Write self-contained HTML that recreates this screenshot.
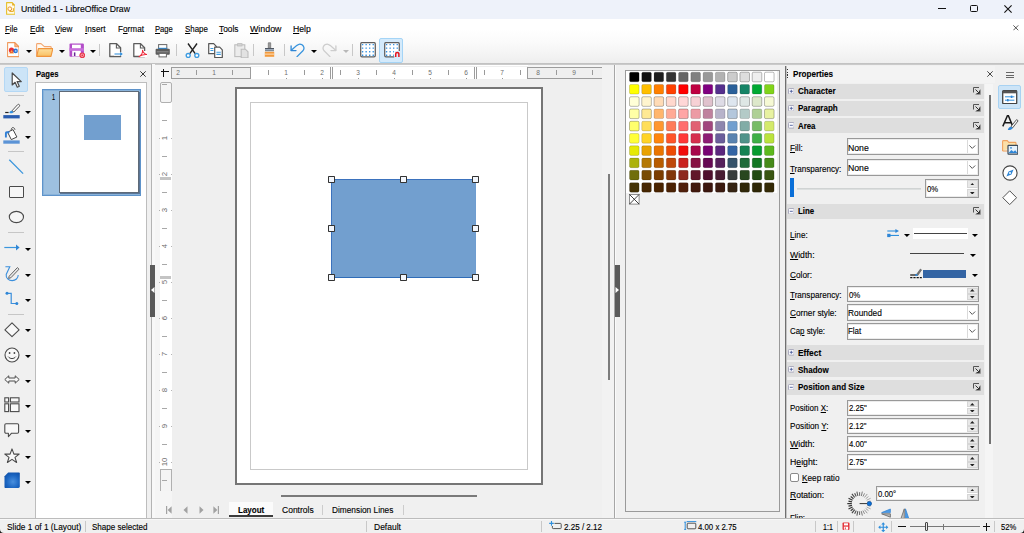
<!DOCTYPE html>
<html><head><meta charset="utf-8"><title>Untitled 1 - LibreOffice Draw</title>
<style>
*{box-sizing:border-box;margin:0;padding:0}
html,body{width:1024px;height:533px;overflow:hidden;background:#f0f0f0;font-family:"Liberation Sans",sans-serif;font-size:11px;color:#000}
.a{position:absolute}
.t{position:absolute;white-space:nowrap;line-height:14px;height:14px;-webkit-text-stroke:0.13px currentColor}
u{text-decoration-thickness:1px;text-underline-offset:1px}
.b{font-weight:bold}
.sec{position:absolute;left:787px;width:196px;height:15px;background:#dedede}
.sec .t{left:11px;top:0;font-weight:bold;font-size:11px;letter-spacing:-0.3px}
.pm{position:absolute;left:1px;top:3px;width:9px;height:9px;border:1px solid #8a8a9a;background:#fff;border-radius:1px}
.pm:before{content:"";position:absolute;left:1px;top:3px;width:5px;height:1px;background:#33518a}
.pm.plus:after{content:"";position:absolute;left:3px;top:1px;width:1px;height:5px;background:#33518a}
.more{position:absolute;left:186px;top:4px;width:8px;height:8px}
.box{position:absolute;background:#fff;border:1px solid #7a7a7a}
.box .t{left:3px;top:0px;font-size:11px}
.cb:after{content:"";position:absolute;right:14px;top:1px;bottom:1px;width:1px;background:#d0d0d0}
.lbl{font-size:11px;left:790px}
.sp{position:absolute;right:0;top:0;bottom:0;width:12px;background:#f0f0f0;border-left:1px solid #d4d4d4}
.sep{position:absolute;width:1px;background:#c4c4c4}
.arr{position:absolute;width:0;height:0;border-left:3px solid transparent;border-right:3px solid transparent;border-top:4px solid #000}
.sw{position:absolute;width:10px;height:10px;border-radius:1.5px}
</style></head><body>

<div class="a" style="left:0;top:0;width:1024px;height:19px;background:#eef2fa"></div>
<div class="t" style="left:20.60px;top:2.97px;font-size:9.80px;line-height:normal;height:auto;transform-origin:0 0;transform:scaleX(0.8868);">Untitled 1 - LibreOffice Draw</div>
<svg class="a" style="left:5.800px;top:1.800px" width="9.600" height="12.800" viewBox="0 0 9.600 12.800"><path d="M.6 .6h5.600l2.800 2.800v8.800H.6z" fill="#fffbe6" stroke="#e6c02c" stroke-width="1.100" stroke-linejoin="round"/><path d="M6.200 .6v2.800h2.800z" fill="#e8a820"/><circle cx="3.800" cy="6.800" r="1.900" fill="none" stroke="#e89030" stroke-width="1"/><path d="M3.400 9.400h4v-3.200" fill="none" stroke="#e8a820" stroke-width="1"/></svg>
<div class="a" style="left:938px;top:8px;width:8px;height:1.200px;background:#111"></div>
<div class="a" style="left:970.300px;top:4.600px;width:7.600px;height:7.600px;border:1.200px solid #111;border-radius:1.500px"></div>
<svg class="a" style="left:1003.500px;top:4.700px" width="8" height="8" viewBox="0 0 8 8"><path d="M.4 .4l7.200 7.200M7.600 .4l-7.200 7.200" stroke="#111" stroke-width="1.100"/></svg>
<div class="a" style="left:0;top:19px;width:1024px;height:44px;background:linear-gradient(#fff 0%,#fff 22%,#fbfbfb 50%,#f4f4f4 80%,#eeeeee 100%)"></div>
<div class="t" style="left:5.10px;top:22.75px;font-size:9.60px;line-height:normal;height:auto;transform-origin:0 0;transform:scaleX(0.8081);"><u>F</u>ile</div>
<div class="t" style="left:29.50px;top:22.75px;font-size:9.60px;line-height:normal;height:auto;transform-origin:0 0;transform:scaleX(0.8524);"><u>E</u>dit</div>
<div class="t" style="left:55.20px;top:22.75px;font-size:9.60px;line-height:normal;height:auto;transform-origin:0 0;transform:scaleX(0.8432);"><u>V</u>iew</div>
<div class="t" style="left:84.80px;top:22.75px;font-size:9.60px;line-height:normal;height:auto;transform-origin:0 0;transform:scaleX(0.8497);"><u>I</u>nsert</div>
<div class="t" style="left:117.60px;top:22.75px;font-size:9.60px;line-height:normal;height:auto;transform-origin:0 0;transform:scaleX(0.8552);">F<u>o</u>rmat</div>
<div class="t" style="left:155.40px;top:22.75px;font-size:9.60px;line-height:normal;height:auto;transform-origin:0 0;transform:scaleX(0.7939);"><u>P</u>age</div>
<div class="t" style="left:184.80px;top:22.75px;font-size:9.60px;line-height:normal;height:auto;transform-origin:0 0;transform:scaleX(0.8249);"><u>S</u>hape</div>
<div class="t" style="left:219.00px;top:22.75px;font-size:9.60px;line-height:normal;height:auto;transform-origin:0 0;transform:scaleX(0.8701);"><u>T</u>ools</div>
<div class="t" style="left:250.10px;top:22.75px;font-size:9.60px;line-height:normal;height:auto;transform-origin:0 0;transform:scaleX(0.9226);"><u>W</u>indow</div>
<div class="t" style="left:293.30px;top:22.75px;font-size:9.60px;line-height:normal;height:auto;transform-origin:0 0;transform:scaleX(0.9015);"><u>H</u>elp</div>
<svg class="a" style="left:1013px;top:25px" width="6" height="6" viewBox="0 0 8 8"><path d="M.5 .5l6.5 6.5M7 .5l-6.500 6.500" stroke="#222" stroke-width="1"/></svg>
<div class="a" style="left:0;top:63px;width:1024px;height:1px;background:#c2c2c2"></div>
<div class="a" style="left:0;top:64px;width:1024px;height:1px;background:#cacaca"></div>
<svg class="a" style="left:6.7px;top:42.4px" width="12.8" height="15.2" viewBox="0 0 12.8 15.2"><path d="M.6 .6h7.200l4.200 4.200v9.800H.6z" fill="#fff" stroke="#f09a5e" stroke-width="1.100" stroke-linejoin="round"/><path d="M7.800 .6l4.200 4.200H7.800z" fill="#f6b488" stroke="#f08a44" stroke-width=".8" stroke-linejoin="round"/><path d="M2.200 11.600L4.600 7.600L7 11.600z" fill="#f5a030"/><circle cx="4.500" cy="8.200" r="2.600" fill="#e8303a"/><path d="M3.300 10.200L4.600 8L5.900 10.200z" fill="#f8b040"/><circle cx="8.600" cy="8.900" r="2.300" fill="#2a78d8"/><circle cx="8.700" cy="8.900" r=".9" fill="#a6d4ff"/></svg>
<svg class="a" style="left:26.3px;top:50.0px" width="6" height="4" viewBox="0 0 6 4"><path d="M0 0h6 l-3.0 3 z" fill="#000"/></svg>
<svg class="a" style="left:36px;top:42.8px" width="17.4" height="14.4" viewBox="0 0 17.4 14.4"><defs><linearGradient id="fg" x1="0" y1="0" x2="0" y2="1"><stop offset="0" stop-color="#fde0a0"/><stop offset="1" stop-color="#f9c062"/></linearGradient></defs><path d="M.6 13.200V1.400c0-.5.300-.8.800-.8h3.600l3.400 3h6c.5 0 .8.300.8.800v1.400" fill="#fffaf2" stroke="#f3a670" stroke-width="1.100" stroke-linejoin="round"/><path d="M.8 13.400L2.400 5.600h14.400l-1.800 7.800z" fill="url(#fg)" stroke="#f0943c" stroke-width="1.100" stroke-linejoin="round"/></svg>
<svg class="a" style="left:58.5px;top:50.0px" width="6" height="4" viewBox="0 0 6 4"><path d="M0 0h6 l-3.0 3 z" fill="#000"/></svg>
<svg class="a" style="left:68.5px;top:43px" width="16.5" height="15" viewBox="0 0 16.5 15"><rect x=".5" y=".4" width="14.400" height="13.400" rx="1.100" fill="#b24cc8"/><rect x=".5" y="5.200" width="14.400" height="2.600" fill="#c870dc"/><rect x="3" y="1.700" width="8.800" height="3.500" fill="#fff"/><rect x="3.200" y="7.800" width="8.600" height="5.600" fill="#fff"/><rect x="4.900" y="9.400" width="1.500" height="3.600" fill="#6a2496"/><circle cx="13.300" cy="12.300" r="2.900" fill="#ea3648"/><circle cx="13.300" cy="12.300" r="1.300" fill="none" stroke="#fbd0d4" stroke-width=".7"/></svg>
<svg class="a" style="left:90.3px;top:50.0px" width="6" height="4" viewBox="0 0 6 4"><path d="M0 0h6 l-3.0 3 z" fill="#000"/></svg>
<div class="a" style="left:99px;top:44px;width:1px;height:12px;background:#c8c8c8"></div>
<svg class="a" style="left:108.5px;top:43.3px" width="14.5" height="14.5" viewBox="0 0 14.5 14.5"><path d="M.8 .7h6.800l4 4v8.800H.8z" fill="#fff" stroke="#5d5d5d" stroke-width="1.300" stroke-linejoin="round"/><path d="M7.400 .8v4.200h4.200" fill="none" stroke="#5d5d5d" stroke-width="1.100"/><rect x="5" y="9.300" width="8.500" height="3.400" fill="#fff"/><path d="M5.500 11h7" stroke="#2f8fdc" stroke-width="1.050"/><path d="M11.200 9l2.600 2l-2.600 2z" fill="#2f8fdc"/></svg>
<svg class="a" style="left:132.5px;top:43.3px" width="14.5" height="14.5" viewBox="0 0 14.5 14.5"><path d="M.8 .7h6.800l4 4v8.800H.8z" fill="#fff" stroke="#5d5d5d" stroke-width="1.300" stroke-linejoin="round"/><path d="M7.400 .8v4.200h4.200" fill="none" stroke="#5d5d5d" stroke-width="1.100"/><rect x="6" y="8" width="8" height="6" fill="#fff"/><path d="M9.500 7.200c.3 2.500-1 5-3.400 6.500M9.500 7.200c.5 2.300 2 3.800 4.300 4.300M6.300 13.300c2.300-1.400 5-2 7.500-1.800" fill="none" stroke="#ec2b3c" stroke-width="1.050" stroke-linecap="round"/></svg>
<svg class="a" style="left:155px;top:44px" width="15.5" height="13.5" viewBox="0 0 15.5 13.5"><rect x="3.600" y=".6" width="8.200" height="4.400" fill="#fff" stroke="#666" stroke-width="1"/><rect x="3.200" y="3.800" width="9" height="1.500" fill="#2f8fdc"/><rect x=".6" y="4.800" width="14.200" height="6" rx="1" fill="#5c5c5c"/><rect x="1.800" y="7.200" width="11.800" height="1.200" fill="#8a8a8a"/><rect x="4" y="9.400" width="7.400" height="3.500" fill="#fff" stroke="#666" stroke-width="1"/></svg>
<div class="a" style="left:176px;top:44px;width:1px;height:12px;background:#c8c8c8"></div>
<svg class="a" style="left:184.5px;top:42.5px" width="15" height="15.5" viewBox="0 0 15 15.5"><path d="M3 .5l7.200 10.200M12 .5L4.800 10.700" stroke="#222" stroke-width="1.400" fill="none"/><circle cx="3.200" cy="12.500" r="2" fill="#fff" stroke="#3d9be0" stroke-width="1.400"/><circle cx="11.800" cy="12.500" r="2" fill="#fff" stroke="#3d9be0" stroke-width="1.400"/></svg>
<svg class="a" style="left:208px;top:42.5px" width="15.5" height="15.5" viewBox="0 0 15.5 15.5"><path d="M.7 .7h5l2.600 2.600v7.400H.7z" fill="#fff" stroke="#555" stroke-width="1.200" stroke-linejoin="round"/><path d="M2.400 5.500h3M2.400 7.500h3" stroke="#3d9be0" stroke-width="1"/><path d="M6.700 4.200h5l2.600 2.600v7.700H6.700z" fill="#fff" stroke="#555" stroke-width="1.200" stroke-linejoin="round"/><path d="M8.400 9.200h4.400M8.400 11.400h4.400" stroke="#3d9be0" stroke-width="1.100"/></svg>
<svg class="a" style="left:233.5px;top:42.5px" width="15.5" height="15.5" viewBox="0 0 15.5 15.5"><rect x=".8" y="1.800" width="10" height="11.800" fill="#ececec" stroke="#bdbdbd" stroke-width="1.100"/><rect x="3.600" y=".6" width="4.400" height="2.400" fill="#d2d2d2" stroke="#bdbdbd" stroke-width=".8"/><path d="M7.200 6.200h4.200l2.600 2.600v6H7.200z" fill="#e2e2e2" stroke="#bdbdbd" stroke-width="1.100"/></svg>
<div class="a" style="left:253px;top:44px;width:1px;height:12px;background:#c8c8c8"></div>
<svg class="a" style="left:263.5px;top:42px" width="11" height="15.5" viewBox="0 0 11 15.5"><path d="M4.300 .8h2.400v5.400h-2.400z" fill="#9a9a9a" stroke="#777" stroke-width=".8"/><path d="M1 6h9v3.200H1z" fill="#4e5560"/><rect x="1" y="7.400" width="9" height="1" fill="#cfe0f0"/><path d="M.8 9.800h9.400v5H.8z" fill="#f39a3c"/><rect x=".8" y="11.600" width="9.400" height="1" fill="#fde2c0"/></svg>
<div class="a" style="left:284px;top:44px;width:1px;height:12px;background:#c8c8c8"></div>
<svg class="a" style="left:290px;top:42.5px" width="15" height="14.5" viewBox="0 0 15 14.5"><path d="M7 13.700L12.900 7.800C15.200 5.300 13.400 1 9.700 1C7.600 1 6.400 2.200 1.300 7.300" fill="none" stroke="#3793dd" stroke-width="1.250" stroke-linecap="round"/><path d="M1.100 3v4.600h4.900" fill="none" stroke="#2f86d6" stroke-width="1.300" stroke-linecap="round" stroke-linejoin="round"/></svg>
<svg class="a" style="left:311.0px;top:50.0px" width="6" height="4" viewBox="0 0 6 4"><path d="M0 0h6 l-3.0 3 z" fill="#000"/></svg>
<svg class="a" style="left:321.5px;top:42.5px" width="15" height="14.5" viewBox="0 0 15 14.5"><g transform="translate(15 0) scale(-1 1)"><path d="M7 13.700L12.900 7.800C15.200 5.300 13.400 1 9.700 1C7.600 1 6.400 2.200 1.300 7.300" fill="none" stroke="#cdcdcd" stroke-width="1.250" stroke-linecap="round"/><path d="M1.100 3v4.600h4.900" fill="none" stroke="#cdcdcd" stroke-width="1.300" stroke-linecap="round" stroke-linejoin="round"/></g></svg>
<svg class="a" style="left:342.7px;top:49.8px" width="6" height="4" viewBox="0 0 6 4"><path d="M0 0h6 l-3.0 3 z" fill="#b8b8b8"/></svg>
<div class="a" style="left:352px;top:44px;width:1px;height:12px;background:#c8c8c8"></div>
<svg class="a" style="left:360px;top:42px" width="16.4" height="16" viewBox="0 0 16.4 16"><rect x=".7" y=".6" width="14.600" height="14.200" rx="1.300" fill="#fff" stroke="#5e5e5e" stroke-width="1.250"/><rect x="1.90" y="1.90" width="1.400" height="1.400" rx=".3" fill="#2f8fe0"/><rect x="1.90" y="5.45" width="1.400" height="1.400" rx=".3" fill="#2f8fe0"/><rect x="1.90" y="9.00" width="1.400" height="1.400" rx=".3" fill="#2f8fe0"/><rect x="1.90" y="12.55" width="1.400" height="1.400" rx=".3" fill="#2f8fe0"/><rect x="5.45" y="1.90" width="1.400" height="1.400" rx=".3" fill="#2f8fe0"/><rect x="5.45" y="5.45" width="1.400" height="1.400" rx=".3" fill="#2f8fe0"/><rect x="5.45" y="9.00" width="1.400" height="1.400" rx=".3" fill="#2f8fe0"/><rect x="5.45" y="12.55" width="1.400" height="1.400" rx=".3" fill="#2f8fe0"/><rect x="9.00" y="1.90" width="1.400" height="1.400" rx=".3" fill="#2f8fe0"/><rect x="9.00" y="5.45" width="1.400" height="1.400" rx=".3" fill="#2f8fe0"/><rect x="9.00" y="9.00" width="1.400" height="1.400" rx=".3" fill="#2f8fe0"/><rect x="9.00" y="12.55" width="1.400" height="1.400" rx=".3" fill="#2f8fe0"/><rect x="12.55" y="1.90" width="1.400" height="1.400" rx=".3" fill="#2f8fe0"/><rect x="12.55" y="5.45" width="1.400" height="1.400" rx=".3" fill="#2f8fe0"/><rect x="12.55" y="9.00" width="1.400" height="1.400" rx=".3" fill="#2f8fe0"/><rect x="12.55" y="12.55" width="1.400" height="1.400" rx=".3" fill="#2f8fe0"/></svg>
<div class="a" style="left:379px;top:38px;width:23.600px;height:24.500px;background:#d4eafb;border:1px solid #a4d4f6;border-radius:2px"></div>
<svg class="a" style="left:384px;top:42px" width="16.4" height="16" viewBox="0 0 16.4 16"><rect x=".7" y=".6" width="14.600" height="14.200" rx="1.300" fill="#fff" stroke="#5e5e5e" stroke-width="1.250"/><rect x="1.90" y="1.90" width="1.400" height="1.400" rx=".3" fill="#2f8fe0"/><rect x="1.90" y="5.45" width="1.400" height="1.400" rx=".3" fill="#2f8fe0"/><rect x="1.90" y="9.00" width="1.400" height="1.400" rx=".3" fill="#2f8fe0"/><rect x="1.90" y="12.55" width="1.400" height="1.400" rx=".3" fill="#2f8fe0"/><rect x="5.45" y="1.90" width="1.400" height="1.400" rx=".3" fill="#2f8fe0"/><rect x="5.45" y="5.45" width="1.400" height="1.400" rx=".3" fill="#2f8fe0"/><rect x="5.45" y="9.00" width="1.400" height="1.400" rx=".3" fill="#2f8fe0"/><rect x="5.45" y="12.55" width="1.400" height="1.400" rx=".3" fill="#2f8fe0"/><rect x="9.00" y="1.90" width="1.400" height="1.400" rx=".3" fill="#2f8fe0"/><rect x="9.00" y="5.45" width="1.400" height="1.400" rx=".3" fill="#2f8fe0"/><rect x="9.00" y="9.00" width="1.400" height="1.400" rx=".3" fill="#2f8fe0"/><rect x="9.00" y="12.55" width="1.400" height="1.400" rx=".3" fill="#2f8fe0"/><rect x="12.55" y="1.90" width="1.400" height="1.400" rx=".3" fill="#2f8fe0"/><rect x="12.55" y="5.45" width="1.400" height="1.400" rx=".3" fill="#2f8fe0"/><rect x="12.55" y="9.00" width="1.400" height="1.400" rx=".3" fill="#2f8fe0"/><rect x="10.200" y="9" width="6" height="7" fill="#d6ebfb"/><rect x="9.800" y="9.400" width="1.400" height="4.800" fill="#fff"/><path d="M11.700 15v-3a1.600 1.600 0 0 1 3.200 0v3" fill="none" stroke="#e8141e" stroke-width="1.500"/></svg>
<div class="a" style="left:4px;top:67px;width:24px;height:25px;background:#cce4f7;border:1px solid #b4d8f5;border-radius:2px"></div>
<svg class="a" style="left:10.5px;top:71.5px" width="12" height="17" viewBox="0 0 12 17"><path d="M1.200 1v12l2.900-2.700l2.200 4.900l2-.9l-2.200-4.700h4.200z" fill="#fff" stroke="#4a4a4a" stroke-width="1.200" stroke-linejoin="round"/></svg>
<div class="a" style="left:8px;top:95px;width:16px;height:1px;background:#c6c6c6"></div>
<svg class="a" style="left:3px;top:103px" width="18" height="17" viewBox="0 0 18 17"><path d="M2.200 9.500h3.400" stroke="#222" stroke-width="1.200"/><path d="M6.400 9.900c0-1.400 1.200-2.400 2.600-2.200l1.500 1.400c-.4 1.200-2.400 1.600-4.100.8z" fill="#2f8fe0"/><path d="M9.200 7.600L14.600 1.700c.5-.5 1.300-.5 1.700 0c.4.400.4 1.100 0 1.600L10.800 9z" fill="#fff" stroke="#444" stroke-width=".9" stroke-linejoin="round"/><rect x=".3" y="12.100" width="16.400" height="3.300" fill="#2a5db0"/></svg>
<svg class="a" style="left:25.1px;top:111.0px" width="6" height="4" viewBox="0 0 6 4"><path d="M0 0h6 l-3.0 3 z" fill="#000"/></svg>
<svg class="a" style="left:3px;top:126px" width="18" height="18" viewBox="0 0 18 18"><path d="M4.600 6.200l5.400-2.600l3.900 7.400l-5.600 2.600z" fill="#fff" stroke="#444" stroke-width="1" stroke-linejoin="round"/><path d="M8.400 4.600c-.4-1.600.2-2.800 1.300-3c1.100-.2 2 .7 2.300 2.200" fill="none" stroke="#444" stroke-width=".9"/><path d="M6.400 6.200H3.800c-.6 0-.9.300-.9.900v4.400" fill="none" stroke="#2f7fd6" stroke-width="1.900"/><rect x=".3" y="14.400" width="16.400" height="3.300" fill="#5b93d6"/></svg>
<svg class="a" style="left:25.1px;top:135.9px" width="6" height="4" viewBox="0 0 6 4"><path d="M0 0h6 l-3.0 3 z" fill="#000"/></svg>
<div class="a" style="left:8px;top:151px;width:16px;height:1px;background:#c6c6c6"></div>
<svg class="a" style="left:8px;top:158px" width="17" height="17" viewBox="0 0 17 17"><path d="M1.300 1.800L15.100 15.600" stroke="#3b96dd" stroke-width="1.300"/></svg>
<div class="a" style="left:9px;top:186px;width:15px;height:12px;background:#f6f6f6;border:1.3px solid #4a4a4a;border-radius:1px"></div>
<svg class="a" style="left:8px;top:210px" width="17" height="14" viewBox="0 0 17 14"><ellipse cx="8.400" cy="7" rx="7.100" ry="5.600" fill="#f6f6f6" stroke="#4a4a4a" stroke-width="1.100"/></svg>
<div class="a" style="left:8px;top:232px;width:16px;height:1px;background:#c6c6c6"></div>
<svg class="a" style="left:4px;top:243px" width="17" height="9" viewBox="0 0 17 9"><path d="M.3 4.500h13" stroke="#3b96dd" stroke-width="1.200"/><path d="M12 1.600l3.600 2.900l-3.600 2.900z" fill="#2f86d6"/></svg>
<svg class="a" style="left:25.1px;top:247.7px" width="6" height="4" viewBox="0 0 6 4"><path d="M0 0h6 l-3.0 3 z" fill="#000"/></svg>
<svg class="a" style="left:4px;top:265px" width="16" height="17" viewBox="0 0 16 17"><path d="M1.400 1.800h4.400l-3.600 7.600c-.6 3.600 2.600 6.200 6 6.200c3.400 0 6-2.400 6-5.600" fill="none" stroke="#3b8fdc" stroke-width="1.100"/><path d="M5.200 11.200l8.200-8.600l1.600 1.600l-8.200 8.600l-2.200.6z" fill="#e8e8e8" stroke="#555" stroke-width=".9" stroke-linejoin="round"/></svg>
<svg class="a" style="left:25.1px;top:273.5px" width="6" height="4" viewBox="0 0 6 4"><path d="M0 0h6 l-3.0 3 z" fill="#000"/></svg>
<svg class="a" style="left:4.5px;top:291px" width="14" height="15" viewBox="0 0 14 15"><path d="M2 2.300h4.200v10.200h5.800" fill="none" stroke="#3b8fdc" stroke-width="1.200"/><circle cx="2" cy="2.300" r="1.500" fill="#2f86d6"/><circle cx="11.800" cy="12.500" r="1.500" fill="#2f86d6"/></svg>
<svg class="a" style="left:25.1px;top:298.5px" width="6" height="4" viewBox="0 0 6 4"><path d="M0 0h6 l-3.0 3 z" fill="#000"/></svg>
<div class="a" style="left:8px;top:314px;width:16px;height:1px;background:#c6c6c6"></div>
<svg class="a" style="left:3.5px;top:321.5px" width="16" height="16" viewBox="0 0 16 16"><path d="M8 .9l7.100 6.900l-7.100 6.900L.9 7.800z" fill="#f8f8f8" stroke="#4a4a4a" stroke-width="1.100" stroke-linejoin="round"/></svg>
<svg class="a" style="left:25.1px;top:329.4px" width="6" height="4" viewBox="0 0 6 4"><path d="M0 0h6 l-3.0 3 z" fill="#000"/></svg>
<svg class="a" style="left:3.5px;top:346.5px" width="16" height="16" viewBox="0 0 16 16"><circle cx="8" cy="8" r="7" fill="#f8f8f8" stroke="#4a4a4a" stroke-width="1.100"/><circle cx="5.600" cy="6" r=".9" fill="#444"/><circle cx="10.400" cy="6" r=".9" fill="#444"/><path d="M4.200 9.600c1.800 2.600 5.800 2.600 7.600 0" fill="none" stroke="#444" stroke-width="1"/></svg>
<svg class="a" style="left:25.1px;top:354.7px" width="6" height="4" viewBox="0 0 6 4"><path d="M0 0h6 l-3.0 3 z" fill="#000"/></svg>
<svg class="a" style="left:3.5px;top:375px" width="16" height="9" viewBox="0 0 16 9"><path d="M.8 4.500l4-3.700v2.200h6.400V.8l4 3.700l-4 3.700V6H4.800v2.200z" fill="#f8f8f8" stroke="#4a4a4a" stroke-width="1" stroke-linejoin="round"/></svg>
<svg class="a" style="left:25.1px;top:380.0px" width="6" height="4" viewBox="0 0 6 4"><path d="M0 0h6 l-3.0 3 z" fill="#000"/></svg>
<svg class="a" style="left:3.5px;top:397px" width="16" height="15.5" viewBox="0 0 16 15.5"><g fill="#f8f8f8" stroke="#4a4a4a" stroke-width="1.100"><rect x=".8" y=".8" width="3.800" height="4.200"/><rect x="6.400" y=".8" width="8.600" height="4.200"/><rect x=".8" y="6.800" width="3.800" height="7.800"/><rect x="6.400" y="6.800" width="8.600" height="7.800"/></g></svg>
<svg class="a" style="left:25.1px;top:405.2px" width="6" height="4" viewBox="0 0 6 4"><path d="M0 0h6 l-3.0 3 z" fill="#000"/></svg>
<svg class="a" style="left:3.5px;top:422.5px" width="16" height="15" viewBox="0 0 16 15"><path d="M2 .8h11.400c.7 0 1.200.5 1.200 1.200v7c0 .7-.5 1.200-1.200 1.200H7.600L4.400 13.600V10.200H2c-.7 0-1.200-.5-1.200-1.200V2C.8 1.300 1.300.8 2 .8z" fill="#f8f8f8" stroke="#4a4a4a" stroke-width="1.100" stroke-linejoin="round"/></svg>
<svg class="a" style="left:25.1px;top:430.0px" width="6" height="4" viewBox="0 0 6 4"><path d="M0 0h6 l-3.0 3 z" fill="#000"/></svg>
<svg class="a" style="left:3.5px;top:447.5px" width="16" height="15" viewBox="0 0 16 15"><path d="M8 .9l1.900 5.200h5.300l-4.200 3.300l1.600 5.100L8 11.400l-4.600 3.100l1.600-5.100L.8 6.100h5.300z" fill="#f8f8f8" stroke="#4a4a4a" stroke-width="1.100" stroke-linejoin="round"/></svg>
<svg class="a" style="left:25.1px;top:455.8px" width="6" height="4" viewBox="0 0 6 4"><path d="M0 0h6 l-3.0 3 z" fill="#000"/></svg>
<svg class="a" style="left:3.5px;top:472px" width="16.5" height="16.5" viewBox="0 0 16.5 16.5"><defs><radialGradient id="cg" cx=".55" cy=".6" r=".75"><stop offset="0" stop-color="#4a90de"/><stop offset=".55" stop-color="#1c66c2"/><stop offset="1" stop-color="#0c4ca4"/></radialGradient></defs><path d="M4.200 .5h10.600c.6 0 1 .4 1 1v13c0 .8-.6 1.400-1.400 1.400H1.500c-.6 0-1-.4-1-1V4.200z" fill="url(#cg)"/></svg>
<svg class="a" style="left:25.1px;top:480.5px" width="6" height="4" viewBox="0 0 6 4"><path d="M0 0h6 l-3.0 3 z" fill="#000"/></svg>
<div class="t" style="left:36.10px;top:68.15px;font-size:9.60px;line-height:normal;height:auto;transform-origin:0 0;transform:scaleX(0.7955);font-weight:bold;">Pages</div>
<svg class="a" style="left:140.300px;top:71.200px" width="6" height="6" viewBox="0 0 6 6"><path d="M.3 .3l5.400 5.400M5.700 .3l-5.400 5.400" stroke="#222" stroke-width=".9"/></svg>
<div class="a" style="left:35px;top:82px;width:112px;height:436px;background:#fff;border:1px solid #bdbdbd;border-bottom:none"></div>
<div class="a" style="left:42px;top:89px;width:99px;height:106.500px;background:#9dc0e0;border:1px solid #5e93ca;box-shadow:inset 0 0 0 1px #88b2da"></div>
<div class="t" style="left:51.80px;top:91.89px;font-size:8.80px;line-height:normal;height:auto;transform-origin:0 0;transform:scaleX(0.6130);">1</div>
<div class="a" style="left:59px;top:91px;width:80px;height:102px;background:#fff;border:1px solid #5e6a78;box-shadow:1px 1px 0 #5a7596"></div>
<div class="a" style="left:84px;top:115px;width:37px;height:25px;background:#729fcf"></div>
<div class="a" style="left:152px;top:65px;width:451px;height:15px;background:#f5f5f5"></div>
<div class="a" style="left:250px;top:65px;width:278px;height:14px;background:#fff"></div>
<div class="a" style="left:250px;top:66px;width:278px;height:1px;background:#efefef"></div>
<div class="a" style="left:152px;top:65px;width:20px;height:453px;background:#f5f5f5"></div>
<div class="a" style="left:161px;top:70.800px;width:8px;height:1.100px;background:#111"></div>
<div class="a" style="left:163px;top:69px;width:1.100px;height:8px;background:#111"></div>
<div class="a" style="left:171px;top:67px;width:80px;height:12px;background:#efefef;border:1px solid #9c9c9c"></div>
<div class="a" style="left:527px;top:67px;width:76px;height:12px;background:#efefef;border:1px solid #9c9c9c;border-right:none"></div>
<div class="t" style="left:208.7px;top:68px;width:10px;text-align:center;font-size:8px;line-height:10px;height:10px;color:#6e6e6e;-webkit-text-stroke:0;transform:scaleX(.82)">1</div>
<div class="a" style="left:214.0px;top:78px;width:1px;height:1px;background:#9a9a9a"></div>
<div class="t" style="left:172.7px;top:68px;width:10px;text-align:center;font-size:8px;line-height:10px;height:10px;color:#6e6e6e;-webkit-text-stroke:0;transform:scaleX(.82)">2</div>
<div class="a" style="left:178.0px;top:78px;width:1px;height:1px;background:#9a9a9a"></div>
<div class="t" style="left:280.7px;top:68px;width:10px;text-align:center;font-size:8px;line-height:10px;height:10px;color:#6e6e6e;-webkit-text-stroke:0;transform:scaleX(.82)">1</div>
<div class="a" style="left:286.0px;top:78px;width:1px;height:1px;background:#9a9a9a"></div>
<div class="t" style="left:316.7px;top:68px;width:10px;text-align:center;font-size:8px;line-height:10px;height:10px;color:#6e6e6e;-webkit-text-stroke:0;transform:scaleX(.82)">2</div>
<div class="a" style="left:322.0px;top:78px;width:1px;height:1px;background:#9a9a9a"></div>
<div class="t" style="left:352.7px;top:68px;width:10px;text-align:center;font-size:8px;line-height:10px;height:10px;color:#6e6e6e;-webkit-text-stroke:0;transform:scaleX(.82)">3</div>
<div class="a" style="left:358.0px;top:78px;width:1px;height:1px;background:#9a9a9a"></div>
<div class="t" style="left:388.7px;top:68px;width:10px;text-align:center;font-size:8px;line-height:10px;height:10px;color:#6e6e6e;-webkit-text-stroke:0;transform:scaleX(.82)">4</div>
<div class="a" style="left:394.0px;top:78px;width:1px;height:1px;background:#9a9a9a"></div>
<div class="t" style="left:424.7px;top:68px;width:10px;text-align:center;font-size:8px;line-height:10px;height:10px;color:#6e6e6e;-webkit-text-stroke:0;transform:scaleX(.82)">5</div>
<div class="a" style="left:430.0px;top:78px;width:1px;height:1px;background:#9a9a9a"></div>
<div class="t" style="left:460.7px;top:68px;width:10px;text-align:center;font-size:8px;line-height:10px;height:10px;color:#6e6e6e;-webkit-text-stroke:0;transform:scaleX(.82)">6</div>
<div class="a" style="left:466.0px;top:78px;width:1px;height:1px;background:#9a9a9a"></div>
<div class="t" style="left:496.7px;top:68px;width:10px;text-align:center;font-size:8px;line-height:10px;height:10px;color:#6e6e6e;-webkit-text-stroke:0;transform:scaleX(.82)">7</div>
<div class="a" style="left:502.0px;top:78px;width:1px;height:1px;background:#9a9a9a"></div>
<div class="t" style="left:532.7px;top:68px;width:10px;text-align:center;font-size:8px;line-height:10px;height:10px;color:#6e6e6e;-webkit-text-stroke:0;transform:scaleX(.82)">8</div>
<div class="a" style="left:538.0px;top:78px;width:1px;height:1px;background:#9a9a9a"></div>
<div class="t" style="left:568.7px;top:68px;width:10px;text-align:center;font-size:8px;line-height:10px;height:10px;color:#6e6e6e;-webkit-text-stroke:0;transform:scaleX(.82)">9</div>
<div class="a" style="left:574.0px;top:78px;width:1px;height:1px;background:#9a9a9a"></div>
<div class="a" style="left:196.0px;top:70px;width:1px;height:5px;background:#9a9a9a"></div>
<div class="a" style="left:232.0px;top:70px;width:1px;height:5px;background:#9a9a9a"></div>
<div class="a" style="left:268.0px;top:70px;width:1px;height:5px;background:#9a9a9a"></div>
<div class="a" style="left:304.0px;top:70px;width:1px;height:5px;background:#9a9a9a"></div>
<div class="a" style="left:340.0px;top:70px;width:1px;height:5px;background:#9a9a9a"></div>
<div class="a" style="left:376.0px;top:70px;width:1px;height:5px;background:#9a9a9a"></div>
<div class="a" style="left:412.0px;top:70px;width:1px;height:5px;background:#9a9a9a"></div>
<div class="a" style="left:448.0px;top:70px;width:1px;height:5px;background:#9a9a9a"></div>
<div class="a" style="left:484.0px;top:70px;width:1px;height:5px;background:#9a9a9a"></div>
<div class="a" style="left:520.0px;top:70px;width:1px;height:5px;background:#9a9a9a"></div>
<div class="a" style="left:556.0px;top:70px;width:1px;height:5px;background:#9a9a9a"></div>
<div class="a" style="left:592.0px;top:70px;width:1px;height:5px;background:#9a9a9a"></div>
<div class="a" style="left:330.0px;top:67px;width:1px;height:12px;background:#9c9c9c"></div>
<div class="a" style="left:332.0px;top:67px;width:1px;height:12px;background:#9c9c9c"></div>
<div class="a" style="left:474.0px;top:67px;width:1px;height:12px;background:#9c9c9c"></div>
<div class="a" style="left:476.0px;top:67px;width:1px;height:12px;background:#9c9c9c"></div>
<div class="a" style="left:160px;top:102px;width:11.500px;height:368px;background:#fff"></div>
<div class="a" style="left:160px;top:82px;width:11.500px;height:21px;background:#f4f4f4;border:1px solid #b0b0b0;border-radius:2px"></div>
<div class="a" style="left:160px;top:469px;width:11.500px;height:22px;background:#f4f4f4;border:1px solid #b0b0b0;border-bottom:none"></div>
<div class="t" style="left:160px;top:132.5px;width:10px;height:10px;line-height:10px;text-align:center;font-size:7.800px;color:#6a6a6a;-webkit-text-stroke:0;transform:rotate(-90deg);transform-origin:5px 5px">1</div>
<div class="a" style="left:171px;top:138.0px;width:1px;height:1px;background:#b4b4b4"></div>
<div class="a" style="left:159px;top:138.0px;width:1px;height:1px;background:#b0b0b0"></div>
<div class="t" style="left:160px;top:168.5px;width:10px;height:10px;line-height:10px;text-align:center;font-size:7.800px;color:#6a6a6a;-webkit-text-stroke:0;transform:rotate(-90deg);transform-origin:5px 5px">2</div>
<div class="a" style="left:171px;top:174.0px;width:1px;height:1px;background:#b4b4b4"></div>
<div class="a" style="left:159px;top:174.0px;width:1px;height:1px;background:#b0b0b0"></div>
<div class="t" style="left:160px;top:204.5px;width:10px;height:10px;line-height:10px;text-align:center;font-size:7.800px;color:#6a6a6a;-webkit-text-stroke:0;transform:rotate(-90deg);transform-origin:5px 5px">3</div>
<div class="a" style="left:171px;top:210.0px;width:1px;height:1px;background:#b4b4b4"></div>
<div class="a" style="left:159px;top:210.0px;width:1px;height:1px;background:#b0b0b0"></div>
<div class="t" style="left:160px;top:240.5px;width:10px;height:10px;line-height:10px;text-align:center;font-size:7.800px;color:#6a6a6a;-webkit-text-stroke:0;transform:rotate(-90deg);transform-origin:5px 5px">4</div>
<div class="a" style="left:171px;top:246.0px;width:1px;height:1px;background:#b4b4b4"></div>
<div class="a" style="left:159px;top:246.0px;width:1px;height:1px;background:#b0b0b0"></div>
<div class="t" style="left:160px;top:276.5px;width:10px;height:10px;line-height:10px;text-align:center;font-size:7.800px;color:#6a6a6a;-webkit-text-stroke:0;transform:rotate(-90deg);transform-origin:5px 5px">5</div>
<div class="a" style="left:171px;top:282.0px;width:1px;height:1px;background:#b4b4b4"></div>
<div class="a" style="left:159px;top:282.0px;width:1px;height:1px;background:#b0b0b0"></div>
<div class="t" style="left:160px;top:312.5px;width:10px;height:10px;line-height:10px;text-align:center;font-size:7.800px;color:#6a6a6a;-webkit-text-stroke:0;transform:rotate(-90deg);transform-origin:5px 5px">6</div>
<div class="a" style="left:171px;top:318.0px;width:1px;height:1px;background:#b4b4b4"></div>
<div class="a" style="left:159px;top:318.0px;width:1px;height:1px;background:#b0b0b0"></div>
<div class="t" style="left:160px;top:348.5px;width:10px;height:10px;line-height:10px;text-align:center;font-size:7.800px;color:#6a6a6a;-webkit-text-stroke:0;transform:rotate(-90deg);transform-origin:5px 5px">7</div>
<div class="a" style="left:171px;top:354.0px;width:1px;height:1px;background:#b4b4b4"></div>
<div class="a" style="left:159px;top:354.0px;width:1px;height:1px;background:#b0b0b0"></div>
<div class="t" style="left:160px;top:384.5px;width:10px;height:10px;line-height:10px;text-align:center;font-size:7.800px;color:#6a6a6a;-webkit-text-stroke:0;transform:rotate(-90deg);transform-origin:5px 5px">8</div>
<div class="a" style="left:171px;top:390.0px;width:1px;height:1px;background:#b4b4b4"></div>
<div class="a" style="left:159px;top:390.0px;width:1px;height:1px;background:#b0b0b0"></div>
<div class="t" style="left:160px;top:420.5px;width:10px;height:10px;line-height:10px;text-align:center;font-size:7.800px;color:#6a6a6a;-webkit-text-stroke:0;transform:rotate(-90deg);transform-origin:5px 5px">9</div>
<div class="a" style="left:171px;top:426.0px;width:1px;height:1px;background:#b4b4b4"></div>
<div class="a" style="left:159px;top:426.0px;width:1px;height:1px;background:#b0b0b0"></div>
<div class="t" style="left:160px;top:456.5px;width:10px;height:10px;line-height:10px;text-align:center;font-size:7.800px;color:#6a6a6a;-webkit-text-stroke:0;transform:rotate(-90deg);transform-origin:5px 5px">10</div>
<div class="a" style="left:171px;top:462.0px;width:1px;height:1px;background:#b4b4b4"></div>
<div class="a" style="left:159px;top:462.0px;width:1px;height:1px;background:#b0b0b0"></div>
<div class="a" style="left:162px;top:84.0px;width:4.600px;height:1px;background:#a8a8a8"></div>
<div class="a" style="left:162px;top:120.0px;width:4.600px;height:1px;background:#a8a8a8"></div>
<div class="a" style="left:162px;top:156.0px;width:4.600px;height:1px;background:#a8a8a8"></div>
<div class="a" style="left:162px;top:192.0px;width:4.600px;height:1px;background:#a8a8a8"></div>
<div class="a" style="left:162px;top:228.0px;width:4.600px;height:1px;background:#a8a8a8"></div>
<div class="a" style="left:162px;top:264.0px;width:4.600px;height:1px;background:#a8a8a8"></div>
<div class="a" style="left:162px;top:300.0px;width:4.600px;height:1px;background:#a8a8a8"></div>
<div class="a" style="left:162px;top:336.0px;width:4.600px;height:1px;background:#a8a8a8"></div>
<div class="a" style="left:162px;top:372.0px;width:4.600px;height:1px;background:#a8a8a8"></div>
<div class="a" style="left:162px;top:408.0px;width:4.600px;height:1px;background:#a8a8a8"></div>
<div class="a" style="left:162px;top:444.0px;width:4.600px;height:1px;background:#a8a8a8"></div>
<div class="a" style="left:162px;top:480.0px;width:4.600px;height:1px;background:#a8a8a8"></div>
<div class="a" style="left:160px;top:177.0px;width:11px;height:3px;background:#c4c4c4"></div>
<div class="a" style="left:160px;top:276.0px;width:11px;height:3px;background:#c4c4c4"></div>
<div class="a" style="left:151px;top:64px;width:1px;height:454px;background:#b4b4b4"></div>
<div class="a" style="left:152px;top:64px;width:3px;height:454px;background:#f8f8f8"></div>
<div class="a" style="left:150px;top:265px;width:5px;height:52px;background:#5a5a5a"></div>
<svg class="a" style="left:150px;top:286px" width="5" height="8" viewBox="0 0 5 8"><path d="M4.500 1l-3.500 3l3.500 3z" fill="#fff"/></svg>
<div class="a" style="left:172px;top:79px;width:432px;height:411px;background:#efefef"></div>
<div class="a" style="left:235px;top:87px;width:308px;height:398px;background:#fff;border:2px solid #757575;border-left-width:2px;border-top-width:2px"></div>
<div class="a" style="left:250px;top:102px;width:278px;height:368px;border:1px solid #c9c9c9"></div>
<div class="a" style="left:330.700px;top:178.700px;width:145.600px;height:99.600px;background:#729fcf;border:1px solid #3b72bd;border-right-color:#6f9dd0;border-bottom-color:#2f6cb8"></div>
<div class="a" style="left:328.1px;top:176.0px;width:6.600px;height:6.600px;background:#f2f6fc;border:1px solid #333;border-radius:.8px"></div>
<div class="a" style="left:328.1px;top:225.1px;width:6.600px;height:6.600px;background:#f2f6fc;border:1px solid #333;border-radius:.8px"></div>
<div class="a" style="left:328.1px;top:274.2px;width:6.600px;height:6.600px;background:#f2f6fc;border:1px solid #333;border-radius:.8px"></div>
<div class="a" style="left:400.2px;top:176.0px;width:6.600px;height:6.600px;background:#f2f6fc;border:1px solid #333;border-radius:.8px"></div>
<div class="a" style="left:400.2px;top:274.2px;width:6.600px;height:6.600px;background:#f2f6fc;border:1px solid #333;border-radius:.8px"></div>
<div class="a" style="left:472.2px;top:176.0px;width:6.600px;height:6.600px;background:#f2f6fc;border:1px solid #333;border-radius:.8px"></div>
<div class="a" style="left:472.2px;top:225.1px;width:6.600px;height:6.600px;background:#f2f6fc;border:1px solid #333;border-radius:.8px"></div>
<div class="a" style="left:472.2px;top:274.2px;width:6.600px;height:6.600px;background:#f2f6fc;border:1px solid #333;border-radius:.8px"></div>
<div class="a" style="left:281px;top:495px;width:196px;height:2px;background:#7a7a7a"></div>
<svg class="a" style="left:166px;top:505.5px" width="6" height="8" viewBox="0 0 6 8"><rect x="0" y="0" width="1.200" height="8" fill="#a2a2a2"/><path d="M5.600 .3v7.400L1.600 4z" fill="#a2a2a2"/></svg>
<svg class="a" style="left:182.5px;top:505.5px" width="5" height="8" viewBox="0 0 5 8"><path d="M4.500 .3v7.400L.5 4z" fill="#a2a2a2"/></svg>
<svg class="a" style="left:198.5px;top:505.5px" width="5" height="8" viewBox="0 0 5 8"><path d="M.5 .3v7.400L4.500 4z" fill="#a2a2a2"/></svg>
<svg class="a" style="left:213px;top:505.5px" width="6" height="8" viewBox="0 0 6 8"><rect x="4.800" y="0" width="1.200" height="8" fill="#a2a2a2"/><path d="M.4 .3v7.400L4.400 4z" fill="#a2a2a2"/></svg>
<div class="a" style="left:229px;top:502px;width:44px;height:14px;background:#fbfbfb"></div>
<div class="a" style="left:229px;top:515px;width:44px;height:2px;background:#3c3c3c"></div>
<div class="t" style="left:237.60px;top:504.15px;font-size:9.60px;line-height:normal;height:auto;transform-origin:0 0;transform:scaleX(0.8326);font-weight:bold;">Layout</div>
<div class="t" style="left:281.60px;top:504.15px;font-size:9.60px;line-height:normal;height:auto;transform-origin:0 0;transform:scaleX(0.8868);">Controls</div>
<div class="a" style="left:322px;top:505px;width:1px;height:10px;background:#cccccc"></div>
<div class="t" style="left:332.40px;top:504.15px;font-size:9.60px;line-height:normal;height:auto;transform-origin:0 0;transform:scaleX(0.8652);">Dimension Lines</div>
<div class="a" style="left:403px;top:505px;width:1px;height:10px;background:#cccccc"></div>
<div class="a" style="left:602px;top:65px;width:12px;height:453px;background:#f2f2f2"></div>
<div class="a" style="left:614px;top:65px;width:1px;height:453px;background:#a6a6a6"></div>
<div class="a" style="left:615px;top:65px;width:1px;height:453px;background:#fafafa"></div>
<div class="a" style="left:608px;top:174px;width:2px;height:206px;background:#7c7c7c"></div>
<div class="a" style="left:615px;top:265px;width:5px;height:52px;background:#5a5a5a"></div>
<svg class="a" style="left:615px;top:286px" width="5" height="8" viewBox="0 0 5 8"><path d="M.5 1l3.500 3l-3.500 3z" fill="#fff"/></svg>
<div class="a" style="left:625px;top:70px;width:155px;height:442px;border:1px solid #9a9a9a;background:#f0f0f0"></div>
<div class="a" style="left:626px;top:71px;width:150.500px;height:122px;background:#fff"></div>
<svg class="a" style="left:626px;top:70px" width="152" height="126" viewBox="0 0 152 126"><rect x="3.50" y="2.20" width="9.600" height="9.600" rx="1.400" fill="#000000" stroke="#000" stroke-opacity=".2" stroke-width=".8"/><rect x="15.77" y="2.20" width="9.600" height="9.600" rx="1.400" fill="#111111" stroke="#000" stroke-opacity=".2" stroke-width=".8"/><rect x="28.04" y="2.20" width="9.600" height="9.600" rx="1.400" fill="#1C1C1C" stroke="#000" stroke-opacity=".2" stroke-width=".8"/><rect x="40.31" y="2.20" width="9.600" height="9.600" rx="1.400" fill="#333333" stroke="#000" stroke-opacity=".2" stroke-width=".8"/><rect x="52.58" y="2.20" width="9.600" height="9.600" rx="1.400" fill="#666666" stroke="#000" stroke-opacity=".2" stroke-width=".8"/><rect x="64.85" y="2.20" width="9.600" height="9.600" rx="1.400" fill="#808080" stroke="#000" stroke-opacity=".2" stroke-width=".8"/><rect x="77.12" y="2.20" width="9.600" height="9.600" rx="1.400" fill="#999999" stroke="#000" stroke-opacity=".2" stroke-width=".8"/><rect x="89.39" y="2.20" width="9.600" height="9.600" rx="1.400" fill="#B2B2B2" stroke="#000" stroke-opacity=".2" stroke-width=".8"/><rect x="101.66" y="2.20" width="9.600" height="9.600" rx="1.400" fill="#CCCCCC" stroke="#000" stroke-opacity=".34" stroke-width=".8"/><rect x="113.93" y="2.20" width="9.600" height="9.600" rx="1.400" fill="#DDDDDD" stroke="#000" stroke-opacity=".34" stroke-width=".8"/><rect x="126.20" y="2.20" width="9.600" height="9.600" rx="1.400" fill="#EEEEEE" stroke="#000" stroke-opacity=".34" stroke-width=".8"/><rect x="138.47" y="2.20" width="9.600" height="9.600" rx="1.400" fill="#FFFFFF" stroke="#000" stroke-opacity=".34" stroke-width=".8"/><rect x="3.50" y="14.47" width="9.600" height="9.600" rx="1.400" fill="#FFFF00" stroke="#000" stroke-opacity=".2" stroke-width=".8"/><rect x="15.77" y="14.47" width="9.600" height="9.600" rx="1.400" fill="#FFBF00" stroke="#000" stroke-opacity=".2" stroke-width=".8"/><rect x="28.04" y="14.47" width="9.600" height="9.600" rx="1.400" fill="#FF8000" stroke="#000" stroke-opacity=".2" stroke-width=".8"/><rect x="40.31" y="14.47" width="9.600" height="9.600" rx="1.400" fill="#FF4000" stroke="#000" stroke-opacity=".2" stroke-width=".8"/><rect x="52.58" y="14.47" width="9.600" height="9.600" rx="1.400" fill="#FF0000" stroke="#000" stroke-opacity=".2" stroke-width=".8"/><rect x="64.85" y="14.47" width="9.600" height="9.600" rx="1.400" fill="#BF0041" stroke="#000" stroke-opacity=".2" stroke-width=".8"/><rect x="77.12" y="14.47" width="9.600" height="9.600" rx="1.400" fill="#800080" stroke="#000" stroke-opacity=".2" stroke-width=".8"/><rect x="89.39" y="14.47" width="9.600" height="9.600" rx="1.400" fill="#55308D" stroke="#000" stroke-opacity=".2" stroke-width=".8"/><rect x="101.66" y="14.47" width="9.600" height="9.600" rx="1.400" fill="#2A6099" stroke="#000" stroke-opacity=".2" stroke-width=".8"/><rect x="113.93" y="14.47" width="9.600" height="9.600" rx="1.400" fill="#158466" stroke="#000" stroke-opacity=".2" stroke-width=".8"/><rect x="126.20" y="14.47" width="9.600" height="9.600" rx="1.400" fill="#00A933" stroke="#000" stroke-opacity=".2" stroke-width=".8"/><rect x="138.47" y="14.47" width="9.600" height="9.600" rx="1.400" fill="#81D41A" stroke="#000" stroke-opacity=".2" stroke-width=".8"/><rect x="3.50" y="26.74" width="9.600" height="9.600" rx="1.400" fill="#FFFFD7" stroke="#000" stroke-opacity=".34" stroke-width=".8"/><rect x="15.77" y="26.74" width="9.600" height="9.600" rx="1.400" fill="#FFF5CE" stroke="#000" stroke-opacity=".34" stroke-width=".8"/><rect x="28.04" y="26.74" width="9.600" height="9.600" rx="1.400" fill="#FFDBB6" stroke="#000" stroke-opacity=".34" stroke-width=".8"/><rect x="40.31" y="26.74" width="9.600" height="9.600" rx="1.400" fill="#FFD8CE" stroke="#000" stroke-opacity=".34" stroke-width=".8"/><rect x="52.58" y="26.74" width="9.600" height="9.600" rx="1.400" fill="#FFD7D7" stroke="#000" stroke-opacity=".34" stroke-width=".8"/><rect x="64.85" y="26.74" width="9.600" height="9.600" rx="1.400" fill="#F7D1D5" stroke="#000" stroke-opacity=".34" stroke-width=".8"/><rect x="77.12" y="26.74" width="9.600" height="9.600" rx="1.400" fill="#E0C2CD" stroke="#000" stroke-opacity=".34" stroke-width=".8"/><rect x="89.39" y="26.74" width="9.600" height="9.600" rx="1.400" fill="#DEDCE6" stroke="#000" stroke-opacity=".34" stroke-width=".8"/><rect x="101.66" y="26.74" width="9.600" height="9.600" rx="1.400" fill="#DEE6EF" stroke="#000" stroke-opacity=".34" stroke-width=".8"/><rect x="113.93" y="26.74" width="9.600" height="9.600" rx="1.400" fill="#DEE7E5" stroke="#000" stroke-opacity=".34" stroke-width=".8"/><rect x="126.20" y="26.74" width="9.600" height="9.600" rx="1.400" fill="#DDE8CB" stroke="#000" stroke-opacity=".34" stroke-width=".8"/><rect x="138.47" y="26.74" width="9.600" height="9.600" rx="1.400" fill="#F6F9D4" stroke="#000" stroke-opacity=".34" stroke-width=".8"/><rect x="3.50" y="39.01" width="9.600" height="9.600" rx="1.400" fill="#FFFFA6" stroke="#000" stroke-opacity=".34" stroke-width=".8"/><rect x="15.77" y="39.01" width="9.600" height="9.600" rx="1.400" fill="#FFE994" stroke="#000" stroke-opacity=".34" stroke-width=".8"/><rect x="28.04" y="39.01" width="9.600" height="9.600" rx="1.400" fill="#FFB66C" stroke="#000" stroke-opacity=".2" stroke-width=".8"/><rect x="40.31" y="39.01" width="9.600" height="9.600" rx="1.400" fill="#FFAA95" stroke="#000" stroke-opacity=".2" stroke-width=".8"/><rect x="52.58" y="39.01" width="9.600" height="9.600" rx="1.400" fill="#FFA6A6" stroke="#000" stroke-opacity=".34" stroke-width=".8"/><rect x="64.85" y="39.01" width="9.600" height="9.600" rx="1.400" fill="#EC9BA4" stroke="#000" stroke-opacity=".2" stroke-width=".8"/><rect x="77.12" y="39.01" width="9.600" height="9.600" rx="1.400" fill="#BF819E" stroke="#000" stroke-opacity=".2" stroke-width=".8"/><rect x="89.39" y="39.01" width="9.600" height="9.600" rx="1.400" fill="#B7B3CA" stroke="#000" stroke-opacity=".2" stroke-width=".8"/><rect x="101.66" y="39.01" width="9.600" height="9.600" rx="1.400" fill="#B4C7DC" stroke="#000" stroke-opacity=".34" stroke-width=".8"/><rect x="113.93" y="39.01" width="9.600" height="9.600" rx="1.400" fill="#B3CAC7" stroke="#000" stroke-opacity=".2" stroke-width=".8"/><rect x="126.20" y="39.01" width="9.600" height="9.600" rx="1.400" fill="#AFD095" stroke="#000" stroke-opacity=".2" stroke-width=".8"/><rect x="138.47" y="39.01" width="9.600" height="9.600" rx="1.400" fill="#E8F2A1" stroke="#000" stroke-opacity=".34" stroke-width=".8"/><rect x="3.50" y="51.28" width="9.600" height="9.600" rx="1.400" fill="#FFFF6D" stroke="#000" stroke-opacity=".34" stroke-width=".8"/><rect x="15.77" y="51.28" width="9.600" height="9.600" rx="1.400" fill="#FFDE59" stroke="#000" stroke-opacity=".2" stroke-width=".8"/><rect x="28.04" y="51.28" width="9.600" height="9.600" rx="1.400" fill="#FF972F" stroke="#000" stroke-opacity=".2" stroke-width=".8"/><rect x="40.31" y="51.28" width="9.600" height="9.600" rx="1.400" fill="#FF7B59" stroke="#000" stroke-opacity=".2" stroke-width=".8"/><rect x="52.58" y="51.28" width="9.600" height="9.600" rx="1.400" fill="#FF6D6D" stroke="#000" stroke-opacity=".2" stroke-width=".8"/><rect x="64.85" y="51.28" width="9.600" height="9.600" rx="1.400" fill="#E16173" stroke="#000" stroke-opacity=".2" stroke-width=".8"/><rect x="77.12" y="51.28" width="9.600" height="9.600" rx="1.400" fill="#A1467E" stroke="#000" stroke-opacity=".2" stroke-width=".8"/><rect x="89.39" y="51.28" width="9.600" height="9.600" rx="1.400" fill="#8E86AE" stroke="#000" stroke-opacity=".2" stroke-width=".8"/><rect x="101.66" y="51.28" width="9.600" height="9.600" rx="1.400" fill="#729FCF" stroke="#000" stroke-opacity=".2" stroke-width=".8"/><rect x="113.93" y="51.28" width="9.600" height="9.600" rx="1.400" fill="#81ACA6" stroke="#000" stroke-opacity=".2" stroke-width=".8"/><rect x="126.20" y="51.28" width="9.600" height="9.600" rx="1.400" fill="#77BC65" stroke="#000" stroke-opacity=".2" stroke-width=".8"/><rect x="138.47" y="51.28" width="9.600" height="9.600" rx="1.400" fill="#D4EA6B" stroke="#000" stroke-opacity=".2" stroke-width=".8"/><rect x="3.50" y="63.55" width="9.600" height="9.600" rx="1.400" fill="#FFFF38" stroke="#000" stroke-opacity=".2" stroke-width=".8"/><rect x="15.77" y="63.55" width="9.600" height="9.600" rx="1.400" fill="#FFD428" stroke="#000" stroke-opacity=".2" stroke-width=".8"/><rect x="28.04" y="63.55" width="9.600" height="9.600" rx="1.400" fill="#FF860D" stroke="#000" stroke-opacity=".2" stroke-width=".8"/><rect x="40.31" y="63.55" width="9.600" height="9.600" rx="1.400" fill="#FF5429" stroke="#000" stroke-opacity=".2" stroke-width=".8"/><rect x="52.58" y="63.55" width="9.600" height="9.600" rx="1.400" fill="#FF3838" stroke="#000" stroke-opacity=".2" stroke-width=".8"/><rect x="64.85" y="63.55" width="9.600" height="9.600" rx="1.400" fill="#D62E4E" stroke="#000" stroke-opacity=".2" stroke-width=".8"/><rect x="77.12" y="63.55" width="9.600" height="9.600" rx="1.400" fill="#8D1D75" stroke="#000" stroke-opacity=".2" stroke-width=".8"/><rect x="89.39" y="63.55" width="9.600" height="9.600" rx="1.400" fill="#6B5E9B" stroke="#000" stroke-opacity=".2" stroke-width=".8"/><rect x="101.66" y="63.55" width="9.600" height="9.600" rx="1.400" fill="#5983B0" stroke="#000" stroke-opacity=".2" stroke-width=".8"/><rect x="113.93" y="63.55" width="9.600" height="9.600" rx="1.400" fill="#50938A" stroke="#000" stroke-opacity=".2" stroke-width=".8"/><rect x="126.20" y="63.55" width="9.600" height="9.600" rx="1.400" fill="#3FAF46" stroke="#000" stroke-opacity=".2" stroke-width=".8"/><rect x="138.47" y="63.55" width="9.600" height="9.600" rx="1.400" fill="#BBE33D" stroke="#000" stroke-opacity=".2" stroke-width=".8"/><rect x="3.50" y="75.82" width="9.600" height="9.600" rx="1.400" fill="#E6E905" stroke="#000" stroke-opacity=".2" stroke-width=".8"/><rect x="15.77" y="75.82" width="9.600" height="9.600" rx="1.400" fill="#E8A202" stroke="#000" stroke-opacity=".2" stroke-width=".8"/><rect x="28.04" y="75.82" width="9.600" height="9.600" rx="1.400" fill="#EA7500" stroke="#000" stroke-opacity=".2" stroke-width=".8"/><rect x="40.31" y="75.82" width="9.600" height="9.600" rx="1.400" fill="#ED4C05" stroke="#000" stroke-opacity=".2" stroke-width=".8"/><rect x="52.58" y="75.82" width="9.600" height="9.600" rx="1.400" fill="#F10D0C" stroke="#000" stroke-opacity=".2" stroke-width=".8"/><rect x="64.85" y="75.82" width="9.600" height="9.600" rx="1.400" fill="#A7074B" stroke="#000" stroke-opacity=".2" stroke-width=".8"/><rect x="77.12" y="75.82" width="9.600" height="9.600" rx="1.400" fill="#780373" stroke="#000" stroke-opacity=".2" stroke-width=".8"/><rect x="89.39" y="75.82" width="9.600" height="9.600" rx="1.400" fill="#5B277D" stroke="#000" stroke-opacity=".2" stroke-width=".8"/><rect x="101.66" y="75.82" width="9.600" height="9.600" rx="1.400" fill="#3465A4" stroke="#000" stroke-opacity=".2" stroke-width=".8"/><rect x="113.93" y="75.82" width="9.600" height="9.600" rx="1.400" fill="#168253" stroke="#000" stroke-opacity=".2" stroke-width=".8"/><rect x="126.20" y="75.82" width="9.600" height="9.600" rx="1.400" fill="#069A2E" stroke="#000" stroke-opacity=".2" stroke-width=".8"/><rect x="138.47" y="75.82" width="9.600" height="9.600" rx="1.400" fill="#5EB91E" stroke="#000" stroke-opacity=".2" stroke-width=".8"/><rect x="3.50" y="88.09" width="9.600" height="9.600" rx="1.400" fill="#ACB20C" stroke="#000" stroke-opacity=".2" stroke-width=".8"/><rect x="15.77" y="88.09" width="9.600" height="9.600" rx="1.400" fill="#B47804" stroke="#000" stroke-opacity=".2" stroke-width=".8"/><rect x="28.04" y="88.09" width="9.600" height="9.600" rx="1.400" fill="#B85C00" stroke="#000" stroke-opacity=".2" stroke-width=".8"/><rect x="40.31" y="88.09" width="9.600" height="9.600" rx="1.400" fill="#BE480A" stroke="#000" stroke-opacity=".2" stroke-width=".8"/><rect x="52.58" y="88.09" width="9.600" height="9.600" rx="1.400" fill="#C9211E" stroke="#000" stroke-opacity=".2" stroke-width=".8"/><rect x="64.85" y="88.09" width="9.600" height="9.600" rx="1.400" fill="#861141" stroke="#000" stroke-opacity=".2" stroke-width=".8"/><rect x="77.12" y="88.09" width="9.600" height="9.600" rx="1.400" fill="#650953" stroke="#000" stroke-opacity=".2" stroke-width=".8"/><rect x="89.39" y="88.09" width="9.600" height="9.600" rx="1.400" fill="#55215B" stroke="#000" stroke-opacity=".2" stroke-width=".8"/><rect x="101.66" y="88.09" width="9.600" height="9.600" rx="1.400" fill="#355269" stroke="#000" stroke-opacity=".2" stroke-width=".8"/><rect x="113.93" y="88.09" width="9.600" height="9.600" rx="1.400" fill="#1E6A39" stroke="#000" stroke-opacity=".2" stroke-width=".8"/><rect x="126.20" y="88.09" width="9.600" height="9.600" rx="1.400" fill="#127622" stroke="#000" stroke-opacity=".2" stroke-width=".8"/><rect x="138.47" y="88.09" width="9.600" height="9.600" rx="1.400" fill="#468A1A" stroke="#000" stroke-opacity=".2" stroke-width=".8"/><rect x="3.50" y="100.36" width="9.600" height="9.600" rx="1.400" fill="#706E0C" stroke="#000" stroke-opacity=".2" stroke-width=".8"/><rect x="15.77" y="100.36" width="9.600" height="9.600" rx="1.400" fill="#784B04" stroke="#000" stroke-opacity=".2" stroke-width=".8"/><rect x="28.04" y="100.36" width="9.600" height="9.600" rx="1.400" fill="#7B3D00" stroke="#000" stroke-opacity=".2" stroke-width=".8"/><rect x="40.31" y="100.36" width="9.600" height="9.600" rx="1.400" fill="#813709" stroke="#000" stroke-opacity=".2" stroke-width=".8"/><rect x="52.58" y="100.36" width="9.600" height="9.600" rx="1.400" fill="#8D281E" stroke="#000" stroke-opacity=".2" stroke-width=".8"/><rect x="64.85" y="100.36" width="9.600" height="9.600" rx="1.400" fill="#611729" stroke="#000" stroke-opacity=".2" stroke-width=".8"/><rect x="77.12" y="100.36" width="9.600" height="9.600" rx="1.400" fill="#4E102D" stroke="#000" stroke-opacity=".2" stroke-width=".8"/><rect x="89.39" y="100.36" width="9.600" height="9.600" rx="1.400" fill="#481D32" stroke="#000" stroke-opacity=".2" stroke-width=".8"/><rect x="101.66" y="100.36" width="9.600" height="9.600" rx="1.400" fill="#383D3C" stroke="#000" stroke-opacity=".2" stroke-width=".8"/><rect x="113.93" y="100.36" width="9.600" height="9.600" rx="1.400" fill="#28471F" stroke="#000" stroke-opacity=".2" stroke-width=".8"/><rect x="126.20" y="100.36" width="9.600" height="9.600" rx="1.400" fill="#224B12" stroke="#000" stroke-opacity=".2" stroke-width=".8"/><rect x="138.47" y="100.36" width="9.600" height="9.600" rx="1.400" fill="#395511" stroke="#000" stroke-opacity=".2" stroke-width=".8"/><rect x="3.50" y="112.63" width="9.600" height="9.600" rx="1.400" fill="#443205" stroke="#000" stroke-opacity=".2" stroke-width=".8"/><rect x="15.77" y="112.63" width="9.600" height="9.600" rx="1.400" fill="#472702" stroke="#000" stroke-opacity=".2" stroke-width=".8"/><rect x="28.04" y="112.63" width="9.600" height="9.600" rx="1.400" fill="#492300" stroke="#000" stroke-opacity=".2" stroke-width=".8"/><rect x="40.31" y="112.63" width="9.600" height="9.600" rx="1.400" fill="#4B2204" stroke="#000" stroke-opacity=".2" stroke-width=".8"/><rect x="52.58" y="112.63" width="9.600" height="9.600" rx="1.400" fill="#50200C" stroke="#000" stroke-opacity=".2" stroke-width=".8"/><rect x="64.85" y="112.63" width="9.600" height="9.600" rx="1.400" fill="#41190D" stroke="#000" stroke-opacity=".2" stroke-width=".8"/><rect x="77.12" y="112.63" width="9.600" height="9.600" rx="1.400" fill="#3B160E" stroke="#000" stroke-opacity=".2" stroke-width=".8"/><rect x="89.39" y="112.63" width="9.600" height="9.600" rx="1.400" fill="#3A1A0F" stroke="#000" stroke-opacity=".2" stroke-width=".8"/><rect x="101.66" y="112.63" width="9.600" height="9.600" rx="1.400" fill="#362413" stroke="#000" stroke-opacity=".2" stroke-width=".8"/><rect x="113.93" y="112.63" width="9.600" height="9.600" rx="1.400" fill="#302709" stroke="#000" stroke-opacity=".2" stroke-width=".8"/><rect x="126.20" y="112.63" width="9.600" height="9.600" rx="1.400" fill="#2E2706" stroke="#000" stroke-opacity=".2" stroke-width=".8"/><rect x="138.47" y="112.63" width="9.600" height="9.600" rx="1.400" fill="#342A06" stroke="#000" stroke-opacity=".2" stroke-width=".8"/></svg>
<svg class="a" style="left:629.200px;top:194.200px" width="10.600" height="10.600" viewBox="0 0 11 11"><rect x=".5" y=".5" width="10" height="10" fill="#fff" stroke="#8a8a8a"/><path d="M.5 .5l10 10M10.500 .5l-10 10" stroke="#222" stroke-width=".9"/></svg>
<div class="a" style="left:785px;top:66px;width:1px;height:452px;background:#707070"></div>
<div class="a" style="left:786px;top:66px;width:1px;height:452px;background:#c4c4c4"></div>
<div class="a" style="left:787px;top:66px;width:208px;height:17px;background:#f3f3f3"></div>
<div class="a" style="left:787px;top:69.0px;width:1.300px;height:1.300px;background:#333"></div>
<div class="a" style="left:787px;top:71.7px;width:1.300px;height:1.300px;background:#333"></div>
<div class="a" style="left:787px;top:74.4px;width:1.300px;height:1.300px;background:#333"></div>
<div class="a" style="left:787px;top:77.1px;width:1.300px;height:1.300px;background:#333"></div>
<div class="t" style="left:793.10px;top:68.35px;font-size:9.60px;line-height:normal;height:auto;transform-origin:0 0;transform:scaleX(0.8445);font-weight:bold;">Properties</div>
<svg class="a" style="left:987px;top:71.2px" width="6" height="6" viewBox="0 0 6 6"><path d="M.3 .3l5.400 5.400M5.700 .3l-5.400 5.400" stroke="#333" stroke-width=".9"/></svg>
<div class="a" style="left:1006px;top:72.0px;width:7.500px;height:1.200px;background:#666"></div>
<div class="a" style="left:1006px;top:74.5px;width:7.500px;height:1.200px;background:#666"></div>
<div class="a" style="left:1006px;top:77.0px;width:7.500px;height:1.200px;background:#666"></div>
<div class="a" style="left:787px;top:83.5px;width:196.500px;height:15px;background:#dedede"></div>
<svg class="a" style="left:787.6px;top:87.5px" width="6.6" height="6.6" viewBox="0 0 6.6 6.6"><rect x=".5" y=".5" width="5.600" height="5.600" rx=".8" fill="#fafafd" stroke="#a4a4b8" stroke-width=".9"/><path d="M1.800 3.300h3" stroke="#4a5c9a" stroke-width=".9"/><path d="M3.300 1.800v3" stroke="#4a5c9a" stroke-width=".9"/></svg>
<div class="t" style="left:797.90px;top:85.05px;font-size:9.60px;line-height:normal;height:auto;transform-origin:0 0;transform:scaleX(0.8389);font-weight:bold;">Character</div>
<svg class="a" style="left:973px;top:87px" width="8" height="8" viewBox="0 0 8 8"><path d="M.5 5.500V.5h5.500" fill="none" stroke="#555" stroke-width="1"/><path d="M7.500 2.500v5h-5" fill="none" stroke="#999" stroke-width="1"/><path d="M2.500 2.500l3.800 3.800M6.500 3.500v3h-3" fill="none" stroke="#333" stroke-width="1"/></svg>
<div class="a" style="left:787px;top:100.9px;width:196.500px;height:15px;background:#dedede"></div>
<svg class="a" style="left:787.6px;top:104.9px" width="6.6" height="6.6" viewBox="0 0 6.6 6.6"><rect x=".5" y=".5" width="5.600" height="5.600" rx=".8" fill="#fafafd" stroke="#a4a4b8" stroke-width=".9"/><path d="M1.800 3.300h3" stroke="#4a5c9a" stroke-width=".9"/><path d="M3.300 1.800v3" stroke="#4a5c9a" stroke-width=".9"/></svg>
<div class="t" style="left:797.90px;top:102.45px;font-size:9.60px;line-height:normal;height:auto;transform-origin:0 0;transform:scaleX(0.8382);font-weight:bold;">Paragraph</div>
<svg class="a" style="left:973px;top:104.4px" width="8" height="8" viewBox="0 0 8 8"><path d="M.5 5.500V.5h5.500" fill="none" stroke="#555" stroke-width="1"/><path d="M7.500 2.500v5h-5" fill="none" stroke="#999" stroke-width="1"/><path d="M2.500 2.500l3.800 3.800M6.500 3.500v3h-3" fill="none" stroke="#333" stroke-width="1"/></svg>
<div class="a" style="left:787px;top:118.2px;width:196.500px;height:15px;background:#dedede"></div>
<svg class="a" style="left:787.6px;top:122.2px" width="6.6" height="6.6" viewBox="0 0 6.6 6.6"><rect x=".5" y=".5" width="5.600" height="5.600" rx=".8" fill="#fafafd" stroke="#a4a4b8" stroke-width=".9"/><path d="M1.800 3.300h3" stroke="#4a5c9a" stroke-width=".9"/></svg>
<div class="t" style="left:797.90px;top:119.75px;font-size:9.60px;line-height:normal;height:auto;transform-origin:0 0;transform:scaleX(0.8198);font-weight:bold;">Area</div>
<svg class="a" style="left:973px;top:121.7px" width="8" height="8" viewBox="0 0 8 8"><path d="M.5 5.500V.5h5.500" fill="none" stroke="#555" stroke-width="1"/><path d="M7.500 2.500v5h-5" fill="none" stroke="#999" stroke-width="1"/><path d="M2.500 2.500l3.800 3.800M6.500 3.500v3h-3" fill="none" stroke="#333" stroke-width="1"/></svg>
<div class="a" style="left:787px;top:203.9px;width:196.500px;height:15px;background:#dedede"></div>
<svg class="a" style="left:787.6px;top:207.9px" width="6.6" height="6.6" viewBox="0 0 6.6 6.6"><rect x=".5" y=".5" width="5.600" height="5.600" rx=".8" fill="#fafafd" stroke="#a4a4b8" stroke-width=".9"/><path d="M1.800 3.300h3" stroke="#4a5c9a" stroke-width=".9"/></svg>
<div class="t" style="left:797.90px;top:205.45px;font-size:9.60px;line-height:normal;height:auto;transform-origin:0 0;transform:scaleX(0.8209);font-weight:bold;">Line</div>
<svg class="a" style="left:973px;top:207.4px" width="8" height="8" viewBox="0 0 8 8"><path d="M.5 5.500V.5h5.500" fill="none" stroke="#555" stroke-width="1"/><path d="M7.500 2.500v5h-5" fill="none" stroke="#999" stroke-width="1"/><path d="M2.500 2.500l3.800 3.800M6.500 3.500v3h-3" fill="none" stroke="#333" stroke-width="1"/></svg>
<div class="a" style="left:787px;top:345.0px;width:196.500px;height:15px;background:#dedede"></div>
<svg class="a" style="left:787.6px;top:349px" width="6.6" height="6.6" viewBox="0 0 6.6 6.6"><rect x=".5" y=".5" width="5.600" height="5.600" rx=".8" fill="#fafafd" stroke="#a4a4b8" stroke-width=".9"/><path d="M1.800 3.300h3" stroke="#4a5c9a" stroke-width=".9"/><path d="M3.300 1.800v3" stroke="#4a5c9a" stroke-width=".9"/></svg>
<div class="t" style="left:797.90px;top:346.55px;font-size:9.60px;line-height:normal;height:auto;transform-origin:0 0;transform:scaleX(0.8698);font-weight:bold;">Effect</div>
<div class="a" style="left:787px;top:362.3px;width:196.500px;height:15px;background:#dedede"></div>
<svg class="a" style="left:787.6px;top:366.3px" width="6.6" height="6.6" viewBox="0 0 6.6 6.6"><rect x=".5" y=".5" width="5.600" height="5.600" rx=".8" fill="#fafafd" stroke="#a4a4b8" stroke-width=".9"/><path d="M1.800 3.300h3" stroke="#4a5c9a" stroke-width=".9"/><path d="M3.300 1.800v3" stroke="#4a5c9a" stroke-width=".9"/></svg>
<div class="t" style="left:797.90px;top:363.85px;font-size:9.60px;line-height:normal;height:auto;transform-origin:0 0;transform:scaleX(0.8342);font-weight:bold;">Shadow</div>
<svg class="a" style="left:973px;top:365.8px" width="8" height="8" viewBox="0 0 8 8"><path d="M.5 5.500V.5h5.500" fill="none" stroke="#555" stroke-width="1"/><path d="M7.500 2.500v5h-5" fill="none" stroke="#999" stroke-width="1"/><path d="M2.500 2.500l3.800 3.800M6.500 3.500v3h-3" fill="none" stroke="#333" stroke-width="1"/></svg>
<div class="a" style="left:787px;top:379.6px;width:196.500px;height:15px;background:#dedede"></div>
<svg class="a" style="left:787.6px;top:383.6px" width="6.6" height="6.6" viewBox="0 0 6.6 6.6"><rect x=".5" y=".5" width="5.600" height="5.600" rx=".8" fill="#fafafd" stroke="#a4a4b8" stroke-width=".9"/><path d="M1.800 3.300h3" stroke="#4a5c9a" stroke-width=".9"/></svg>
<div class="t" style="left:797.90px;top:381.15px;font-size:9.60px;line-height:normal;height:auto;transform-origin:0 0;transform:scaleX(0.8355);font-weight:bold;">Position and Size</div>
<svg class="a" style="left:973px;top:383.1px" width="8" height="8" viewBox="0 0 8 8"><path d="M.5 5.500V.5h5.500" fill="none" stroke="#555" stroke-width="1"/><path d="M7.500 2.500v5h-5" fill="none" stroke="#999" stroke-width="1"/><path d="M2.500 2.500l3.800 3.800M6.500 3.500v3h-3" fill="none" stroke="#333" stroke-width="1"/></svg>
<div class="t" style="left:790.20px;top:141.65px;font-size:9.50px;line-height:normal;height:auto;transform-origin:0 0;transform:scaleX(0.8664);"><u>F</u>ill:</div>
<div class="a" style="left:847.0px;top:138.2px;width:132.0px;height:16.5px;background:#fff;border:1px solid #999;box-shadow:inset 0 0 0 1px #ececec"></div>
<div class="a" style="left:967px;top:140.2px;width:1px;height:12.500px;background:#dadada"></div>
<svg class="a" style="left:969.2px;top:144.5px" width="6.6" height="4.2" viewBox="0 0 6.6 4.2"><path d="M.4 .5l2.900 2.900l2.900-2.900" fill="none" stroke="#555" stroke-width="1"/></svg>
<div class="t" style="left:848.40px;top:141.65px;font-size:9.50px;line-height:normal;height:auto;transform-origin:0 0;transform:scaleX(0.9159);">None</div>
<div class="t" style="left:790.20px;top:162.65px;font-size:9.50px;line-height:normal;height:auto;transform-origin:0 0;transform:scaleX(0.8481);"><u>T</u>ransparency:</div>
<div class="a" style="left:847.0px;top:159.0px;width:132.0px;height:16.5px;background:#fff;border:1px solid #999;box-shadow:inset 0 0 0 1px #ececec"></div>
<div class="a" style="left:967px;top:161.0px;width:1px;height:12.500px;background:#dadada"></div>
<svg class="a" style="left:969.2px;top:165.3px" width="6.6" height="4.2" viewBox="0 0 6.6 4.2"><path d="M.4 .5l2.900 2.900l2.900-2.900" fill="none" stroke="#555" stroke-width="1"/></svg>
<div class="t" style="left:848.40px;top:162.45px;font-size:9.50px;line-height:normal;height:auto;transform-origin:0 0;transform:scaleX(0.9159);">None</div>
<div class="a" style="left:797px;top:187.500px;width:123.500px;height:2px;background:#dcdfdf;border-top:1px solid #d0d3d3"></div>
<div class="a" style="left:790px;top:178px;width:4px;height:19px;background:#0a6fd8"></div>
<div class="a" style="left:925.0px;top:178.5px;width:54.0px;height:19.8px;background:#fff;border:1px solid #999;box-shadow:inset 0 0 0 1px #ececec"></div>
<div class="a" style="left:967.0px;top:179.7px;width:10.500px;height:8.4px;background:#e8e8e8;border:1px solid #d6d6d6"></div>
<div class="a" style="left:967.0px;top:188.5px;width:10.500px;height:8.4px;background:#e8e8e8;border:1px solid #d6d6d6"></div>
<svg class="a" style="left:970px;top:182.7px" width="4.6" height="2.6" viewBox="0 0 4.6 2.6"><path d="M0 2.600L2.300 0l2.300 2.600z" fill="#222"/></svg>
<svg class="a" style="left:970px;top:191.5px" width="4.6" height="2.6" viewBox="0 0 4.6 2.6"><path d="M0 0L2.300 2.600L4.600 0z" fill="#222"/></svg>
<div class="t" style="left:926.60px;top:182.65px;font-size:9.50px;line-height:normal;height:auto;transform-origin:0 0;transform:scaleX(0.8084);">0%</div>
<div class="t" style="left:790.20px;top:228.65px;font-size:9.50px;line-height:normal;height:auto;transform-origin:0 0;transform:scaleX(0.8592);"><u>L</u>ine:</div>
<svg class="a" style="left:887px;top:229px" width="12.5" height="8.5" viewBox="0 0 12.5 8.5"><path d="M.3 2h9" stroke="#2f8fdc" stroke-width="1.100"/><path d="M8.400 0l3.600 2l-3.600 2z" fill="#2f86d6"/><rect x=".2" y="4.800" width="3.300" height="3.300" fill="#2f86d6"/><path d="M3 6.450h9" stroke="#2f8fdc" stroke-width="1.100"/></svg>
<svg class="a" style="left:903.8px;top:233.5px" width="6" height="4" viewBox="0 0 6 4"><path d="M0 0h6 l-3.1 3 z" fill="#000"/></svg>
<div class="a" style="left:913px;top:228px;width:54.500px;height:11px;background:#fff"></div>
<div class="a" style="left:914px;top:233px;width:53px;height:1.200px;background:#444"></div>
<svg class="a" style="left:972.1px;top:233.5px" width="6" height="4" viewBox="0 0 6 4"><path d="M0 0h6 l-3.1 3 z" fill="#000"/></svg>
<div class="t" style="left:790.20px;top:248.65px;font-size:9.50px;line-height:normal;height:auto;transform-origin:0 0;transform:scaleX(0.9137);"><u>W</u>idth:</div>
<div class="a" style="left:909.500px;top:253px;width:54.500px;height:1.100px;background:#444"></div>
<svg class="a" style="left:969.5px;top:253.9px" width="6" height="4" viewBox="0 0 6 4"><path d="M0 0h6 l-3.1 3 z" fill="#000"/></svg>
<div class="t" style="left:789.80px;top:268.85px;font-size:9.50px;line-height:normal;height:auto;transform-origin:0 0;transform:scaleX(0.8681);"><u>C</u>olor:</div>
<svg class="a" style="left:909.5px;top:268px" width="12" height="11" viewBox="0 0 12 11"><path d="M.2 7h7" stroke="#111" stroke-width="1.200"/><path d="M.2 9.600h11.600" stroke="#111" stroke-width="1.200" stroke-dasharray="2.200 1"/><path d="M6.400 6.600L10.400 1l1.200.9L7.800 7.600z" fill="#777" stroke="#444" stroke-width=".5"/><path d="M5 7.600c0-1.200 1-1.800 2-1.400l.8 1c-.4 1-1.800 1.200-2.800.4z" fill="#2f86d6"/></svg>
<div class="a" style="left:923px;top:270px;width:42.600px;height:8px;background:#3465a4"></div>
<svg class="a" style="left:972.1px;top:274.0px" width="6" height="4" viewBox="0 0 6 4"><path d="M0 0h6 l-3.1 3 z" fill="#000"/></svg>
<div class="t" style="left:789.80px;top:288.95px;font-size:9.50px;line-height:normal;height:auto;transform-origin:0 0;transform:scaleX(0.8531);"><u>T</u>ransparency:</div>
<div class="a" style="left:847.0px;top:286.3px;width:132.0px;height:15.4px;background:#fff;border:1px solid #999;box-shadow:inset 0 0 0 1px #ececec"></div>
<div class="a" style="left:967.0px;top:287.5px;width:10.500px;height:6.2px;background:#e8e8e8;border:1px solid #d6d6d6"></div>
<div class="a" style="left:967.0px;top:294.1px;width:10.500px;height:6.2px;background:#e8e8e8;border:1px solid #d6d6d6"></div>
<svg class="a" style="left:970px;top:289.4px" width="4.6" height="2.6" viewBox="0 0 4.6 2.6"><path d="M0 2.600L2.300 0l2.300 2.600z" fill="#222"/></svg>
<svg class="a" style="left:970px;top:296px" width="4.6" height="2.6" viewBox="0 0 4.6 2.6"><path d="M0 0L2.300 2.600L4.600 0z" fill="#222"/></svg>
<div class="t" style="left:848.80px;top:288.95px;font-size:9.50px;line-height:normal;height:auto;transform-origin:0 0;transform:scaleX(0.8230);">0%</div>
<div class="t" style="left:789.80px;top:306.65px;font-size:9.50px;line-height:normal;height:auto;transform-origin:0 0;transform:scaleX(0.8654);"><u>C</u>orner style:</div>
<div class="a" style="left:847.0px;top:304.2px;width:132.0px;height:16.5px;background:#fff;border:1px solid #999;box-shadow:inset 0 0 0 1px #ececec"></div>
<div class="a" style="left:967px;top:306.2px;width:1px;height:12.500px;background:#dadada"></div>
<svg class="a" style="left:969.2px;top:310.5px" width="6.6" height="4.2" viewBox="0 0 6.6 4.2"><path d="M.4 .5l2.900 2.900l2.900-2.900" fill="none" stroke="#555" stroke-width="1"/></svg>
<div class="t" style="left:848.40px;top:306.85px;font-size:9.50px;line-height:normal;height:auto;transform-origin:0 0;transform:scaleX(0.8791);">Rounded</div>
<div class="t" style="left:789.80px;top:324.95px;font-size:9.50px;line-height:normal;height:auto;transform-origin:0 0;transform:scaleX(0.8286);">Ca<u>p</u> style:</div>
<div class="a" style="left:847.0px;top:323.0px;width:132.0px;height:16.5px;background:#fff;border:1px solid #999;box-shadow:inset 0 0 0 1px #ececec"></div>
<div class="a" style="left:967px;top:325.0px;width:1px;height:12.500px;background:#dadada"></div>
<svg class="a" style="left:969.2px;top:329.3px" width="6.6" height="4.2" viewBox="0 0 6.6 4.2"><path d="M.4 .5l2.900 2.900l2.900-2.900" fill="none" stroke="#555" stroke-width="1"/></svg>
<div class="t" style="left:848.40px;top:325.25px;font-size:9.50px;line-height:normal;height:auto;transform-origin:0 0;transform:scaleX(0.8335);">Flat</div>
<div class="t" style="left:790.40px;top:402.05px;font-size:9.50px;line-height:normal;height:auto;transform-origin:0 0;transform:scaleX(0.8412);">Position <u>X</u>:</div>
<div class="a" style="left:847.0px;top:400.0px;width:132.0px;height:15.6px;background:#fff;border:1px solid #999;box-shadow:inset 0 0 0 1px #ececec"></div>
<div class="a" style="left:967.0px;top:401.2px;width:10.500px;height:6.3px;background:#e8e8e8;border:1px solid #d6d6d6"></div>
<div class="a" style="left:967.0px;top:407.9px;width:10.500px;height:6.3px;background:#e8e8e8;border:1px solid #d6d6d6"></div>
<svg class="a" style="left:970px;top:403.15px" width="4.6" height="2.6" viewBox="0 0 4.6 2.6"><path d="M0 2.600L2.300 0l2.300 2.600z" fill="#222"/></svg>
<svg class="a" style="left:970px;top:409.85px" width="4.6" height="2.6" viewBox="0 0 4.6 2.6"><path d="M0 0L2.300 2.600L4.600 0z" fill="#222"/></svg>
<div class="t" style="left:849.10px;top:402.25px;font-size:9.50px;line-height:normal;height:auto;transform-origin:0 0;transform:scaleX(0.8096);">2.25"</div>
<div class="t" style="left:789.90px;top:420.45px;font-size:9.50px;line-height:normal;height:auto;transform-origin:0 0;transform:scaleX(0.8632);">Position <u>Y</u>:</div>
<div class="a" style="left:847.0px;top:418.2px;width:132.0px;height:15.4px;background:#fff;border:1px solid #999;box-shadow:inset 0 0 0 1px #ececec"></div>
<div class="a" style="left:967.0px;top:419.4px;width:10.500px;height:6.2px;background:#e8e8e8;border:1px solid #d6d6d6"></div>
<div class="a" style="left:967.0px;top:426.0px;width:10.500px;height:6.2px;background:#e8e8e8;border:1px solid #d6d6d6"></div>
<svg class="a" style="left:970px;top:421.3px" width="4.6" height="2.6" viewBox="0 0 4.6 2.6"><path d="M0 2.600L2.300 0l2.300 2.600z" fill="#222"/></svg>
<svg class="a" style="left:970px;top:427.9px" width="4.6" height="2.6" viewBox="0 0 4.6 2.6"><path d="M0 0L2.300 2.600L4.600 0z" fill="#222"/></svg>
<div class="t" style="left:849.10px;top:420.45px;font-size:9.50px;line-height:normal;height:auto;transform-origin:0 0;transform:scaleX(0.7913);">2.12"</div>
<div class="t" style="left:789.90px;top:438.15px;font-size:9.50px;line-height:normal;height:auto;transform-origin:0 0;transform:scaleX(0.9212);"><u>W</u>idth:</div>
<div class="a" style="left:847.0px;top:436.2px;width:132.0px;height:15.4px;background:#fff;border:1px solid #999;box-shadow:inset 0 0 0 1px #ececec"></div>
<div class="a" style="left:967.0px;top:437.4px;width:10.500px;height:6.2px;background:#e8e8e8;border:1px solid #d6d6d6"></div>
<div class="a" style="left:967.0px;top:444.0px;width:10.500px;height:6.2px;background:#e8e8e8;border:1px solid #d6d6d6"></div>
<svg class="a" style="left:970px;top:439.3px" width="4.6" height="2.6" viewBox="0 0 4.6 2.6"><path d="M0 2.600L2.300 0l2.300 2.600z" fill="#222"/></svg>
<svg class="a" style="left:970px;top:445.9px" width="4.6" height="2.6" viewBox="0 0 4.6 2.6"><path d="M0 0L2.300 2.600L4.600 0z" fill="#222"/></svg>
<div class="t" style="left:849.10px;top:438.25px;font-size:9.50px;line-height:normal;height:auto;transform-origin:0 0;transform:scaleX(0.8096);">4.00"</div>
<div class="t" style="left:789.90px;top:455.85px;font-size:9.50px;line-height:normal;height:auto;transform-origin:0 0;transform:scaleX(0.9169);">H<u>e</u>ight:</div>
<div class="a" style="left:847.0px;top:454.2px;width:132.0px;height:15.4px;background:#fff;border:1px solid #999;box-shadow:inset 0 0 0 1px #ececec"></div>
<div class="a" style="left:967.0px;top:455.4px;width:10.500px;height:6.2px;background:#e8e8e8;border:1px solid #d6d6d6"></div>
<div class="a" style="left:967.0px;top:462.0px;width:10.500px;height:6.2px;background:#e8e8e8;border:1px solid #d6d6d6"></div>
<svg class="a" style="left:970px;top:457.3px" width="4.6" height="2.6" viewBox="0 0 4.6 2.6"><path d="M0 2.600L2.300 0l2.300 2.600z" fill="#222"/></svg>
<svg class="a" style="left:970px;top:463.9px" width="4.6" height="2.6" viewBox="0 0 4.6 2.6"><path d="M0 0L2.300 2.600L4.600 0z" fill="#222"/></svg>
<div class="t" style="left:849.10px;top:456.05px;font-size:9.50px;line-height:normal;height:auto;transform-origin:0 0;transform:scaleX(0.8096);">2.75"</div>
<div class="a" style="left:790.300px;top:473px;width:9.200px;height:9.200px;background:#fff;border:1px solid #8a8a8a;border-radius:2px"></div>
<div class="t" style="left:802.30px;top:471.85px;font-size:9.50px;line-height:normal;height:auto;transform-origin:0 0;transform:scaleX(0.8659);"><u>K</u>eep ratio</div>
<div class="t" style="left:789.90px;top:489.35px;font-size:9.50px;line-height:normal;height:auto;transform-origin:0 0;transform:scaleX(0.8968);"><u>R</u>otation:</div>
<svg class="a" style="left:846.5px;top:491px" width="25.2" height="25.2" viewBox="0 0 25.2 25.2"><path d="M20.40 12.60L24.90 12.60" stroke="#333" stroke-opacity="0.50" stroke-width="0.70"/><path d="M20.20 14.34L23.71 15.14" stroke="#333" stroke-opacity="0.51" stroke-width="0.71"/><path d="M19.63 15.98L23.68 17.94" stroke="#333" stroke-opacity="0.52" stroke-width="0.73"/><path d="M18.70 17.46L21.51 19.71" stroke="#333" stroke-opacity="0.55" stroke-width="0.76"/><path d="M17.46 18.70L20.27 22.22" stroke="#333" stroke-opacity="0.59" stroke-width="0.80"/><path d="M15.98 19.63L17.55 22.87" stroke="#333" stroke-opacity="0.64" stroke-width="0.86"/><path d="M14.34 20.20L15.34 24.59" stroke="#333" stroke-opacity="0.69" stroke-width="0.91"/><path d="M12.60 20.40L12.60 24.00" stroke="#333" stroke-opacity="0.75" stroke-width="0.97"/><path d="M10.86 20.20L9.86 24.59" stroke="#333" stroke-opacity="0.81" stroke-width="1.04"/><path d="M9.22 19.63L7.65 22.87" stroke="#333" stroke-opacity="0.86" stroke-width="1.09"/><path d="M7.74 18.70L4.93 22.22" stroke="#333" stroke-opacity="0.91" stroke-width="1.15"/><path d="M6.50 17.46L3.69 19.71" stroke="#333" stroke-opacity="0.95" stroke-width="1.19"/><path d="M5.57 15.98L1.52 17.94" stroke="#333" stroke-opacity="0.98" stroke-width="1.22"/><path d="M5.00 14.34L1.49 15.14" stroke="#333" stroke-opacity="0.99" stroke-width="1.24"/><path d="M4.80 12.60L0.30 12.60" stroke="#333" stroke-opacity="1.00" stroke-width="1.25"/><path d="M5.00 10.86L1.49 10.06" stroke="#333" stroke-opacity="0.99" stroke-width="1.24"/><path d="M5.57 9.22L1.52 7.26" stroke="#333" stroke-opacity="0.98" stroke-width="1.22"/><path d="M6.50 7.74L3.69 5.49" stroke="#333" stroke-opacity="0.95" stroke-width="1.19"/><path d="M7.74 6.50L4.93 2.98" stroke="#333" stroke-opacity="0.91" stroke-width="1.15"/><path d="M9.22 5.57L7.65 2.33" stroke="#333" stroke-opacity="0.86" stroke-width="1.09"/><path d="M10.86 5.00L9.86 0.61" stroke="#333" stroke-opacity="0.81" stroke-width="1.04"/><path d="M12.60 4.80L12.60 1.20" stroke="#333" stroke-opacity="0.75" stroke-width="0.98"/><path d="M14.34 5.00L15.34 0.61" stroke="#333" stroke-opacity="0.69" stroke-width="0.91"/><path d="M15.98 5.57L17.55 2.33" stroke="#333" stroke-opacity="0.64" stroke-width="0.86"/><path d="M17.46 6.50L20.27 2.98" stroke="#333" stroke-opacity="0.59" stroke-width="0.80"/><path d="M18.70 7.74L21.51 5.49" stroke="#333" stroke-opacity="0.55" stroke-width="0.76"/><path d="M19.63 9.22L23.68 7.26" stroke="#333" stroke-opacity="0.52" stroke-width="0.73"/><path d="M20.20 10.86L23.71 10.06" stroke="#333" stroke-opacity="0.51" stroke-width="0.71"/><circle cx="12.600" cy="12.600" r="7" fill="#f0f0f0"/><path d="M12.600 12.600h8" stroke="#333" stroke-width="1"/><circle cx="22.400" cy="12.600" r="2.200" fill="#0a6fd8" stroke="#0a4a90" stroke-width=".6"/></svg>
<div class="a" style="left:876.3px;top:485.7px;width:102.8px;height:15.6px;background:#fff;border:1px solid #999;box-shadow:inset 0 0 0 1px #ececec"></div>
<div class="a" style="left:967.1px;top:486.9px;width:10.500px;height:6.3px;background:#e8e8e8;border:1px solid #d6d6d6"></div>
<div class="a" style="left:967.1px;top:493.6px;width:10.500px;height:6.3px;background:#e8e8e8;border:1px solid #d6d6d6"></div>
<svg class="a" style="left:970.1px;top:488.85px" width="4.6" height="2.6" viewBox="0 0 4.6 2.6"><path d="M0 2.600L2.300 0l2.300 2.600z" fill="#222"/></svg>
<svg class="a" style="left:970.1px;top:495.55px" width="4.6" height="2.6" viewBox="0 0 4.6 2.6"><path d="M0 0L2.300 2.600L4.600 0z" fill="#222"/></svg>
<div class="t" style="left:878.20px;top:488.05px;font-size:9.50px;line-height:normal;height:auto;transform-origin:0 0;transform:scaleX(0.8121);">0.00°</div>
<div class="t" style="left:789.90px;top:511.65px;font-size:9.50px;line-height:normal;height:auto;transform-origin:0 0;transform:scaleX(0.8358);"><u>F</u>lip:</div>
<svg class="a" style="left:880.5px;top:508.3px" width="10" height="10" viewBox="0 0 10 10"><path d="M.6 4.600L9.400 1v3.600z" fill="#4a9ae6" stroke="#2f7fd0" stroke-width=".7" stroke-linejoin="round"/><path d="M.6 5.800L9.400 9.200v-3.400z" fill="#b8b8b8" stroke="#555" stroke-width=".7" stroke-linejoin="round"/></svg>
<svg class="a" style="left:899.5px;top:507.5px" width="10" height="11" viewBox="0 0 10 11"><path d="M4.300 .8L1 10.400h3.300z" fill="#c4c4c4" stroke="#555" stroke-width=".7" stroke-linejoin="round"/><path d="M5.500 .8L8.800 10.400H5.500z" fill="#4a9ae6" stroke="#2f7fd0" stroke-width=".7" stroke-linejoin="round"/></svg>
<div class="a" style="left:985px;top:84px;width:8px;height:434px;background:#f5f5f5"></div>
<div class="a" style="left:989px;top:95px;width:2px;height:349px;background:#727272"></div>
<div class="a" style="left:997.500px;top:84.500px;width:23.500px;height:24px;background:#cce4f7;border:1px solid #a8d2f2;border-radius:2px"></div>
<svg class="a" style="left:1002px;top:89.5px" width="15.5" height="14.5" viewBox="0 0 15.5 14.5"><rect x=".7" y=".7" width="14" height="13" rx=".8" fill="#fff" stroke="#444" stroke-width="1.300"/><rect x=".7" y=".7" width="14" height="2.600" fill="#555"/><path d="M3 6.800h9.400M3 10.200h9.400" stroke="#2f8fdc" stroke-width="1"/><rect x="8.800" y="5.600" width="1.600" height="2.400" fill="#2f86d6"/><rect x="5" y="9" width="1.600" height="2.400" fill="#2f86d6"/></svg>
<svg class="a" style="left:1002px;top:114.5px" width="16.5" height="15.5" viewBox="0 0 16.5 15.5"><path d="M.8 11.400L5.400 .8h1l4.400 10.600M2.400 7.800h7" fill="none" stroke="#1a1a1a" stroke-width="1.500"/><path d="M9 11.400l5.600-6.800l1.500 1.200l-5.400 7z" fill="#f4f4f4" stroke="#333" stroke-width=".8"/><path d="M5.800 15c.4-2 1.800-3.400 3.400-3.200l1.500 1.200c-.6 1.600-2.600 2.300-4.900 2z" fill="#2f86d6"/></svg>
<svg class="a" style="left:1001.5px;top:139.5px" width="16.5" height="15" viewBox="0 0 16.5 15"><path d="M.6 11V1.400c0-.4.300-.8.800-.8h3.800l1.600 1.800h6.400c.4 0 .8.300.8.800V6" fill="#fbe0a8" stroke="#f0a460" stroke-width="1.100"/><path d="M.6 11h5" stroke="#f0a460" stroke-width="1.100"/><rect x="6" y="5.400" width="9.800" height="8.800" rx=".6" fill="#e6f2fc" stroke="#3a4a5a" stroke-width="1.200"/><path d="M6.600 13l2.800-3l2 1.800l1.800-1.600l2.200 2.800z" fill="#2f86d6"/><circle cx="9" cy="7.800" r=".9" fill="#2f86d6"/></svg>
<svg class="a" style="left:1001.5px;top:164.5px" width="16" height="16" viewBox="0 0 16 16"><circle cx="8" cy="8" r="7.100" fill="#fff" stroke="#444" stroke-width="1.100"/><path d="M11.600 4.400L9.400 9.400L4.400 11.600L6.600 6.600z" fill="#2f86d6"/><circle cx="8" cy="8" r="1" fill="#fff"/></svg>
<svg class="a" style="left:1001.8px;top:189.6px" width="15.4" height="15.4" viewBox="0 0 15.4 15.4"><path d="M7.700 .8l6.900 6.900l-6.900 6.900L.8 7.700z" fill="#fff" stroke="#4a4a4a" stroke-width=".95" stroke-linejoin="round"/></svg>
<div class="a" style="left:0;top:518px;width:1024px;height:15px;background:#f0f0f0"></div>
<div class="a" style="left:0;top:518px;width:1024px;height:1px;background:#bcbcbc"></div>
<div class="a" style="left:0;top:519px;width:1024px;height:1px;background:#f8f8f8"></div>
<svg class="a" style="left:1020px;top:529px" width="4" height="4" viewBox="0 0 4 4"><path d="M4 0v4H0C2.500 4 4 2.500 4 0z" fill="#1a1a1a"/></svg>
<svg class="a" style="left:0;top:529px" width="4" height="4" viewBox="0 0 4 4"><path d="M0 0v4h4C1.500 4 0 2.500 0 0z" fill="#1a1a1a"/></svg>
<div class="t" style="left:7.10px;top:521.05px;font-size:9.50px;line-height:normal;height:auto;transform-origin:0 0;transform:scaleX(0.8739);">Slide 1 of 1 (Layout)</div>
<div class="a" style="left:85px;top:521px;width:1px;height:11px;background:#c8c8c8"></div>
<div class="t" style="left:92.10px;top:521.05px;font-size:9.50px;line-height:normal;height:auto;transform-origin:0 0;transform:scaleX(0.8474);">Shape selected</div>
<div class="a" style="left:366px;top:521px;width:1px;height:11px;background:#c8c8c8"></div>
<div class="t" style="left:373.50px;top:521.05px;font-size:9.50px;line-height:normal;height:auto;transform-origin:0 0;transform:scaleX(0.8937);">Default</div>
<div class="a" style="left:541px;top:521px;width:1px;height:11px;background:#c8c8c8"></div>
<svg class="a" style="left:549px;top:521px" width="13" height="8.5" viewBox="0 0 13 8.5"><rect x="3.400" y="2.400" width="8.800" height="5.200" rx=".8" fill="none" stroke="#555" stroke-width="1"/><rect x="0" y="0" width="5.500" height="5" fill="#f0f0f0"/><path d="M.2 2.400h4.600M2.500 .1v4.600" stroke="#2f8fdc" stroke-width="1.100"/></svg>
<div class="t" style="left:564.10px;top:521.05px;font-size:9.50px;line-height:normal;height:auto;transform-origin:0 0;transform:scaleX(0.8464);">2.25 / 2.12</div>
<svg class="a" style="left:683.5px;top:521px" width="13" height="9" viewBox="0 0 13 9"><rect x="3.200" y="2.200" width="8.600" height="5.600" rx=".8" fill="none" stroke="#555" stroke-width="1"/><path d="M.2 1.200h2M.2 8.400h2M1.200 1.200v7.200" stroke="#2f8fdc" stroke-width="1"/><path d="M3.200 .5h8.600M3.200 0v1.200M11.800 0v1.200" stroke="#2f8fdc" stroke-width=".9"/></svg>
<div class="t" style="left:698.40px;top:521.05px;font-size:9.50px;line-height:normal;height:auto;transform-origin:0 0;transform:scaleX(0.8233);">4.00 x 2.75</div>
<div class="a" style="left:815px;top:521px;width:1px;height:11px;background:#c8c8c8"></div>
<div class="t" style="left:822.60px;top:521.05px;font-size:9.50px;line-height:normal;height:auto;transform-origin:0 0;transform:scaleX(0.7421);">1:1</div>
<div class="a" style="left:837px;top:521px;width:1px;height:11px;background:#c8c8c8"></div>
<svg class="a" style="left:842px;top:521.8px" width="8" height="8.4" viewBox="0 0 8 8.4"><rect x=".5" y=".5" width="7" height="7.400" rx=".9" fill="#e5353c"/><rect x="2" y="1.300" width="4" height="2.100" fill="#fff"/><rect x="1.900" y="4.700" width="4.200" height="3" fill="#fff"/><rect x="2.800" y="5.400" width="1" height="1.900" fill="#e5353c"/></svg>
<div class="a" style="left:853px;top:521px;width:1px;height:11px;background:#c8c8c8"></div>
<div class="a" style="left:874px;top:521px;width:1px;height:11px;background:#c8c8c8"></div>
<svg class="a" style="left:878px;top:521.5px" width="10.5" height="10.5" viewBox="0 0 10.5 10.5"><path d="M5.250 .2l2 2.200h-4zM5.250 10.300l2-2.200h-4zM.2 5.250l2.200-2v4zM10.300 5.250l-2.200-2v4z" fill="#2f8fdc"/><path d="M5.250 2v6.500M2 5.250h6.500" stroke="#2f8fdc" stroke-width="1.200"/></svg>
<div class="a" style="left:891px;top:521px;width:1px;height:11px;background:#c8c8c8"></div>
<div class="a" style="left:898px;top:526px;width:7.500px;height:1.400px;background:#111"></div>
<div class="a" style="left:909.500px;top:526px;width:70px;height:1.200px;background:#777"></div>
<div class="a" style="left:943px;top:523.500px;width:1px;height:6px;background:#777"></div>
<div class="a" style="left:924.800px;top:522.300px;width:3.400px;height:8.600px;background:#e8e8e8;border:1px solid #444;border-radius:1px"></div>
<div class="a" style="left:982.700px;top:526px;width:7.500px;height:1.400px;background:#111"></div>
<div class="a" style="left:985.700px;top:523px;width:1.400px;height:7.500px;background:#111"></div>
<div class="a" style="left:994px;top:521px;width:1px;height:11px;background:#c8c8c8"></div>
<div class="t" style="left:1000.90px;top:521.05px;font-size:9.50px;line-height:normal;height:auto;transform-origin:0 0;transform:scaleX(0.8047);">52%</div>
</body></html>
